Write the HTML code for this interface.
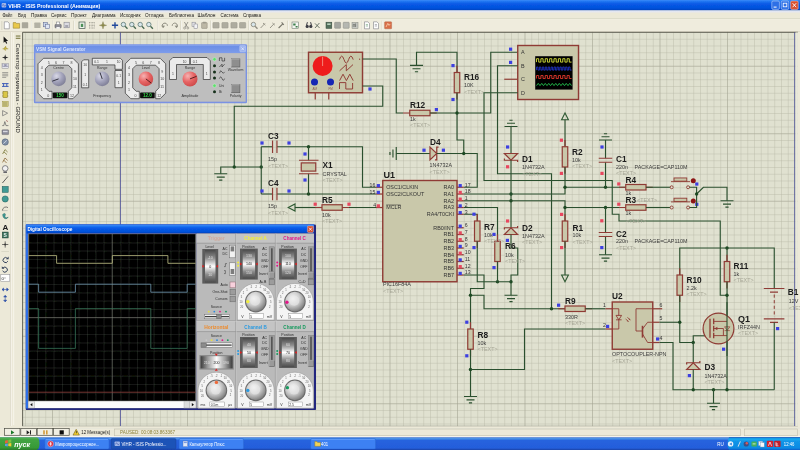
<!DOCTYPE html>
<html lang="ru"><head><meta charset="utf-8"><title>VIHR - ISIS Professional</title>
<style>html,body{margin:0;padding:0;background:#ece9d8;overflow:hidden}svg{display:block}text{font-family:"Liberation Sans",sans-serif}.r{font-weight:bold;font-size:8.3px;fill:#1c1c1c}.v{font-size:5.4px;fill:#3c3c3c}.t{font-size:5.4px;fill:#a6a696}.p{font-size:5.4px;fill:#333}.n{font-size:5.2px;fill:#333}.w{fill:none;stroke:#2b502f;stroke-width:1.12;stroke-linejoin:miter}.c{fill:#c9c8aa;stroke:#8f3b34;stroke-width:1.2}.cl{fill:none;stroke:#8f3b34;stroke-width:1.2}.j{fill:#1f4a24}.mb{fill:#3d3fe0}.mr{fill:#e8465e}</style></head><body>
<svg width="800" height="450" viewBox="0 0 800 450">
<defs><filter id="soft" filterUnits="userSpaceOnUse" x="-10" y="-10" width="820" height="470"><feGaussianBlur stdDeviation="0.4"/></filter></defs>
<g filter="url(#soft)">
<defs>
<linearGradient id="tb" x1="0" y1="0" x2="0" y2="1"><stop offset="0" stop-color="#3a8cf8"/><stop offset="0.16" stop-color="#1c72f0"/><stop offset="0.36" stop-color="#075ae6"/><stop offset="0.76" stop-color="#0552dc"/><stop offset="1" stop-color="#0240ba"/></linearGradient>
<linearGradient id="tk" x1="0" y1="0" x2="0" y2="1"><stop offset="0" stop-color="#3168d5"/><stop offset="0.1" stop-color="#4993e6"/><stop offset="0.25" stop-color="#2663de"/><stop offset="0.85" stop-color="#245edb"/><stop offset="1" stop-color="#1941a5"/></linearGradient>
<linearGradient id="st" x1="0" y1="0" x2="0" y2="1"><stop offset="0" stop-color="#5fb858"/><stop offset="0.15" stop-color="#43a443"/><stop offset="0.8" stop-color="#379a37"/><stop offset="1" stop-color="#2c7a2c"/></linearGradient>
<linearGradient id="tr" x1="0" y1="0" x2="0" y2="1"><stop offset="0" stop-color="#0c59b9"/><stop offset="0.12" stop-color="#19b0f2"/><stop offset="0.3" stop-color="#1295e8"/><stop offset="0.85" stop-color="#0f8ae3"/><stop offset="1" stop-color="#095bc9"/></linearGradient>
<pattern id="gm" x="659.5" y="180.5" width="6.75" height="6.75" patternUnits="userSpaceOnUse"><path d="M0 0.2H6.75 M0.2 0V6.75" stroke="#b6b6a4" stroke-width="0.56" fill="none"/></pattern>
<pattern id="gM" x="659.5" y="200.75" width="67.5" height="67.5" patternUnits="userSpaceOnUse"><path d="M0 0.2H67.5 M0.2 0V67.5" stroke="#a2a290" stroke-width="0.6" fill="none"/></pattern>
</defs>
<rect x="-10" y="-10" width="820" height="470" fill="#ece9d8"/>
<rect x="-10" y="-10" width="820" height="10.5" fill="#3a8cf8"/><rect x="-10" y="0" width="820" height="10.6" fill="url(#tb)"/>
<rect x="1.6" y="3" width="4.6" height="4.6" rx="1" fill="#9fb6e8"/><path d="M2.2 5.4q1-1.6 1.8 0t1.8 0" stroke="#2a3f9a" stroke-width="0.6" fill="none"/>
<text x="8.3" y="7.6" font-size="5.7" font-weight="bold" fill="#fff" textLength="92" lengthAdjust="spacingAndGlyphs">VIHR - ISIS Professional (Анимация)</text>
<rect x="771.8" y="1" width="7.6" height="8.4" rx="1.2" fill="#2d6fe6" stroke="#dfe8fb" stroke-width="0.5"/><rect x="773.6" y="6.6" width="3" height="1" fill="#fff"/>
<rect x="781.2" y="1" width="7.6" height="8.4" rx="1.2" fill="#2d6fe6" stroke="#dfe8fb" stroke-width="0.5"/><rect x="783.2" y="3.2" width="3.6" height="3.6" fill="none" stroke="#fff" stroke-width="0.8"/>
<rect x="790.6" y="1" width="7.6" height="8.4" rx="1.2" fill="#d9502f" stroke="#f3d9d0" stroke-width="0.5"/><path d="M792.6 3.2l3.6 4M796.2 3.2l-3.6 4" stroke="#fff" stroke-width="0.9"/>
<rect x="0" y="10.6" width="800" height="8" fill="#ece9d8"/>
<linearGradient id="mh" x1="0" y1="0" x2="0" y2="1"><stop offset="0" stop-color="#dde5fa"/><stop offset="0.6" stop-color="#e8e8ea"/><stop offset="1" stop-color="#ece9d8"/></linearGradient>
<rect x="0" y="10.6" width="800" height="2.6" fill="url(#mh)"/>
<text x="2.5" y="17.1" font-size="4.9" fill="#151515" textLength="10" lengthAdjust="spacingAndGlyphs">Файл</text>
<text x="18" y="17.1" font-size="4.9" fill="#151515" textLength="8" lengthAdjust="spacingAndGlyphs">Вид</text>
<text x="31" y="17.1" font-size="4.9" fill="#151515" textLength="16" lengthAdjust="spacingAndGlyphs">Правка</text>
<text x="51" y="17.1" font-size="4.9" fill="#151515" textLength="15.5" lengthAdjust="spacingAndGlyphs">Сервис</text>
<text x="71" y="17.1" font-size="4.9" fill="#151515" textLength="16" lengthAdjust="spacingAndGlyphs">Проект</text>
<text x="92" y="17.1" font-size="4.9" fill="#151515" textLength="23.5" lengthAdjust="spacingAndGlyphs">Диаграмма</text>
<text x="120" y="17.1" font-size="4.9" fill="#151515" textLength="20.5" lengthAdjust="spacingAndGlyphs">Исходник</text>
<text x="145" y="17.1" font-size="4.9" fill="#151515" textLength="18.5" lengthAdjust="spacingAndGlyphs">Отладка</text>
<text x="169" y="17.1" font-size="4.9" fill="#151515" textLength="25" lengthAdjust="spacingAndGlyphs">Библиотека</text>
<text x="197.5" y="17.1" font-size="4.9" fill="#151515" textLength="18" lengthAdjust="spacingAndGlyphs">Шаблон</text>
<text x="220.5" y="17.1" font-size="4.9" fill="#151515" textLength="18" lengthAdjust="spacingAndGlyphs">Система</text>
<text x="243" y="17.1" font-size="4.9" fill="#151515" textLength="18" lengthAdjust="spacingAndGlyphs">Справка</text>
<rect x="0" y="18.4" width="800" height="0.5" fill="#c9c6b4"/>
<rect x="0" y="18.9" width="800" height="0.5" fill="#fbfaf4"/>
<rect x="0" y="19.4" width="800" height="12.4" fill="#efecdd"/>
<rect x="0" y="31.3" width="800" height="0.6" fill="#d2cfbe"/>
<rect x="1.6" y="21" width="0.6" height="9" fill="#c9c6b4"/>
<path d="M4.3 21.8h3.4l1.6 1.6v5.4h-5z" fill="#fdfdfd" stroke="#6a6a72" stroke-width="0.5"/>
<path d="M13.2 22.6h2.6l0.6 0.8h3.2v4.8h-6.4z" fill="#e9c84a" stroke="#8a7420" stroke-width="0.5"/>
<rect x="21.8" y="22.3" width="6.4" height="6" rx="0.6" fill="#a9a79a"/>
<rect x="31" y="20.6" width="0.5" height="9.6" fill="#c5c2b0"/><rect x="31.5" y="20.6" width="0.5" height="9.6" fill="#fff"/>
<rect x="34.3" y="22.6" width="6.2" height="5.4" rx="0.6" fill="#b3b1a4"/>
<rect x="43.4" y="22.4" width="4" height="4.4" fill="#c8d4ea" stroke="#56608a" stroke-width="0.5"/><rect x="45.4" y="24.2" width="4" height="4.4" fill="#dfe6f4" stroke="#56608a" stroke-width="0.5"/>
<rect x="52.2" y="20.6" width="0.5" height="9.6" fill="#c5c2b0"/><rect x="52.7" y="20.6" width="0.5" height="9.6" fill="#fff"/>
<rect x="55" y="24.4" width="6.2" height="3.4" rx="0.5" fill="#8d8d96" stroke="#4a4a52" stroke-width="0.5"/><rect x="56.4" y="22" width="3.4" height="2.6" fill="#fff" stroke="#55555c" stroke-width="0.4"/><rect x="56.4" y="27" width="3.4" height="1.8" fill="#f4f4f4"/>
<rect x="64" y="22.2" width="5.2" height="5.6" fill="#dcdce2" stroke="#77777f" stroke-width="0.5"/><rect x="65.2" y="25" width="3" height="2.8" fill="#a7a7b0"/>
<rect x="73.6" y="20.6" width="0.5" height="9.6" fill="#c5c2b0"/><rect x="74.1" y="20.6" width="0.5" height="9.6" fill="#fff"/>
<rect x="79" y="22" width="6" height="6.6" fill="#eef1ea" stroke="#43584a" stroke-width="0.7"/><rect x="80.8" y="23.8" width="2.4" height="3.2" fill="#4b8f58"/>
<path d="M89.2 22.6h5.6M89.2 25.3h5.6M89.2 28h5.6M89.6 22.2v6.2M92 22.2v6.2M94.4 22.2v6.2" stroke="#77776c" stroke-width="0.5" stroke-dasharray="0.8 0.6"/>
<path d="M103 21.6l0.8 2.9 2.9 0.8-2.9 0.8-0.8 2.9-0.8-2.9-2.9-0.8 2.9-0.8z" fill="#8d8a4c" stroke="#6c6a38" stroke-width="0.3"/>
<path d="M115 22.2v6.200M111.900 25.300h6.200" stroke="#234a9c" stroke-width="1.400"/>
<circle cx="123.4" cy="24.5" r="2.2" fill="#d8e6ea" stroke="#6c8480" stroke-width="0.9"/><path d="M125.1 26.2l2.4 2.6" stroke="#4a6a52" stroke-width="1.3"/>
<circle cx="131.8" cy="24.5" r="2.2" fill="#d8e6ea" stroke="#6c8480" stroke-width="0.9"/><path d="M133.5 26.2l2.4 2.6" stroke="#4a6a52" stroke-width="1.3"/>
<circle cx="140.2" cy="24.5" r="2.2" fill="#d8e6ea" stroke="#6c8480" stroke-width="0.9"/><path d="M141.9 26.2l2.4 2.6" stroke="#4a6a52" stroke-width="1.3"/>
<circle cx="148.8" cy="24.5" r="2.2" fill="#d8e6ea" stroke="#6c8480" stroke-width="0.9"/><path d="M150.5 26.2l2.4 2.6" stroke="#4a6a52" stroke-width="1.3"/>
<rect x="157.2" y="20.6" width="0.5" height="9.6" fill="#c5c2b0"/><rect x="157.7" y="20.6" width="0.5" height="9.6" fill="#fff"/>
<path d="M163 27.6a2.6 2.6 0 1 1 4.4-1.8" fill="none" stroke="#8d8b7e" stroke-width="1"/><path d="M161.6 25.4l1.6 2.6 1.8-2.2z" fill="#8d8b7e"/>
<path d="M176.6 27.6a2.6 2.6 0 1 0-4.4-1.8" fill="none" stroke="#8d8b7e" stroke-width="1"/><path d="M178 25.4l-1.6 2.6-1.8-2.2z" fill="#8d8b7e"/>
<rect x="180.6" y="20.6" width="0.5" height="9.6" fill="#c5c2b0"/><rect x="181.1" y="20.6" width="0.5" height="9.6" fill="#fff"/>
<path d="M184.4 22l3 5.2M188 22l-3 5.2" stroke="#83817a" stroke-width="0.8"/><circle cx="184.6" cy="28" r="1" fill="none" stroke="#83817a" stroke-width="0.6"/><circle cx="187.8" cy="28" r="1" fill="none" stroke="#83817a" stroke-width="0.6"/>
<rect x="192" y="22.2" width="3.6" height="4.4" fill="#e6e6ea" stroke="#7f7f88" stroke-width="0.5"/><rect x="194" y="24" width="3.6" height="4.4" fill="#f2f2f5" stroke="#7f7f88" stroke-width="0.5"/>
<rect x="201.6" y="22.6" width="5.6" height="5.8" rx="0.5" fill="#bdb8a6" stroke="#8a8678" stroke-width="0.5"/><rect x="203" y="21.8" width="2.8" height="1.6" fill="#9d9a8c"/>
<rect x="210.4" y="20.6" width="0.5" height="9.6" fill="#c5c2b0"/><rect x="210.9" y="20.6" width="0.5" height="9.6" fill="#fff"/>
<rect x="212.9" y="22.5" width="6.2" height="5.6" rx="0.6" fill="#aeac9f" stroke="#98968a" stroke-width="0.5"/>
<rect x="221.9" y="22.5" width="6.2" height="5.6" rx="0.6" fill="#aeac9f" stroke="#98968a" stroke-width="0.5"/>
<rect x="230.9" y="22.5" width="6.2" height="5.6" rx="0.6" fill="#aeac9f" stroke="#98968a" stroke-width="0.5"/>
<rect x="239.5" y="22.5" width="6.2" height="5.6" rx="0.6" fill="#aeac9f" stroke="#98968a" stroke-width="0.5"/>
<rect x="248.4" y="20.6" width="0.5" height="9.6" fill="#c5c2b0"/><rect x="248.9" y="20.6" width="0.5" height="9.6" fill="#fff"/>
<circle cx="253.4" cy="24.5" r="2.2" fill="#d8e6ea" stroke="#8f8d80" stroke-width="0.9"/><path d="M255.1 26.2l2.4 2.6" stroke="#8f8d80" stroke-width="1.3"/>
<path d="M260.6 28l4.4-4.6M263 23l2.4 2.2" stroke="#9a988b" stroke-width="1"/>
<path d="M270 28l4.4-4.6M272.4 23l2.4 2.2" stroke="#9a988b" stroke-width="1"/>
<path d="M278.6 28l4.2-4.2M281.6 22.4l2.2 2.4" stroke="#77756a" stroke-width="1.1"/>
<rect x="287.6" y="20.6" width="0.5" height="9.6" fill="#c5c2b0"/><rect x="288.1" y="20.6" width="0.5" height="9.6" fill="#fff"/>
<rect x="292" y="22" width="6.4" height="6.6" fill="#f4f6f1" stroke="#5a6a5e" stroke-width="0.5"/><path d="M293.2 23.6h2.4v2h-2.4zM295.6 26h2v1.6h-2z" fill="#3d7f4c"/>
<circle cx="307.2" cy="26.4" r="1.6" fill="#3c3c44"/><circle cx="310.8" cy="26.4" r="1.6" fill="#3c3c44"/><path d="M306.6 25l0.8-2.8M311.4 25l-0.8-2.8" stroke="#3c3c44" stroke-width="1"/>
<path d="M315 28l4.4-5M315 23.4l4.6 4.6" stroke="#4c5a4f" stroke-width="0.8"/>
<rect x="326" y="22.2" width="5.8" height="6.2" fill="#55705c" stroke="#33483a" stroke-width="0.5"/><rect x="327.2" y="23.4" width="3.4" height="1.6" fill="#b9d2be"/>
<rect x="334.6" y="22.3" width="6" height="6" rx="0.6" fill="#a4a6a0" stroke="#85877f" stroke-width="0.5"/>
<rect x="343.2" y="22.3" width="6" height="6" rx="0.6" fill="#b5b7b1" stroke="#85877f" stroke-width="0.5"/>
<rect x="352" y="22.4" width="6" height="6" fill="#c5c7c1" stroke="#85877f" stroke-width="0.5"/><path d="M353.2 27v-2.6h1.6v2.6M355.6 27v-3.6" stroke="#5b5d57" stroke-width="0.6" fill="none"/>
<rect x="361.2" y="20.6" width="0.5" height="9.6" fill="#c5c2b0"/><rect x="361.7" y="20.6" width="0.5" height="9.6" fill="#fff"/>
<path d="M364.5 21.8h3.4l1.6 1.6v5.4h-5z" fill="#fdfdfd" stroke="#6a6a72" stroke-width="0.5"/>
<path d="M365.8 24.6h2.2M365.8 26h2.2" stroke="#4d8a58" stroke-width="0.5"/>
<path d="M373.5 21.8h3.4l1.6 1.6v5.4h-5z" fill="#fdfdfd" stroke="#6a6a72" stroke-width="0.5"/>
<path d="M374.8 24.6h2.2M374.8 26h2.2" stroke="#6f6f78" stroke-width="0.5"/>
<rect x="381.8" y="20.6" width="0.5" height="9.6" fill="#c5c2b0"/><rect x="382.3" y="20.6" width="0.5" height="9.6" fill="#fff"/>
<rect x="384.6" y="21.8" width="7" height="7" rx="0.6" fill="#d96f48" stroke="#a85a3c" stroke-width="0.4"/><path d="M386 27l1.8-3.6 1.2 2 1.2-1.4" stroke="#ffe3c4" stroke-width="0.7" fill="none"/>
<rect x="-10" y="32" width="32.4" height="394" fill="#ece9d8"/>
<rect x="10.4" y="32" width="0.5" height="394" fill="#d0cdbb"/>
<rect x="10.9" y="32" width="0.6" height="394" fill="#fdfcf7"/>
<rect x="13.2" y="33" width="1" height="392" fill="#f7f5ec"/>
<path d="M3.6 36.6v6.2l1.5-1.4 1.1 2.4 1-0.5-1.1-2.3h2z" fill="#151515"/>
<path d="M2.6 48.8h1.8l1.2-1.8 1.2 1.8h1.4M5.6 47v-1M5.6 50.6v-1" stroke="#a8972a" stroke-width="0.8" fill="none"/><path d="M4.4 47.6l2.4 1.2-2.4 1.2z" fill="#d8c444" stroke="#8a7a1e" stroke-width="0.3"/>
<path d="M5.2 54.2l0.7 2.6 2.6 0.7-2.6 0.7-0.7 2.6-0.7-2.6-2.6-0.7 2.6-0.7z" fill="#2a2a2a"/>
<rect x="2" y="63.6" width="6.6" height="4.6" fill="#e4e4ea" stroke="#7c7c88" stroke-width="0.4"/><text x="2.4" y="67.4" font-size="3.4" fill="#3a3a66">LBL</text>
<path d="M2.2 72.6h6M2.2 74.2h6M2.2 75.8h6M2.2 77.4h4" stroke="#6a6a6a" stroke-width="0.6"/>
<path d="M2 83.6h6.6M2 86.4h6.6M3.6 83.6v2.8M6.8 83.6v2.8" stroke="#2d4fb4" stroke-width="0.9"/>
<rect x="3" y="91.4" width="4.4" height="6.2" fill="#d9c646" stroke="#7c701c" stroke-width="0.5"/><path d="M2 93h1M2 96h1M7.4 93h1M7.4 96h1" stroke="#7c701c" stroke-width="0.5"/>
<rect x="2.400" y="101.200" width="5.800" height="5.600" fill="#e2d98a" stroke="#8a8240" stroke-width="0.4"/><path d="M3 103h4.600M3 105h4.600" stroke="#5c5a3a" stroke-width="0.6"/>
<path d="M2.6 110.6l5 2.6-5 2.6z" fill="none" stroke="#6f6f6f" stroke-width="0.7"/>
<path d="M2.2 125.6h1.6l1-4 1.2 4h2.4" stroke="#5f5f5f" stroke-width="0.7" fill="none"/><path d="M6 120.4l2 1.2" stroke="#8a3a3a" stroke-width="0.6"/>
<rect x="2" y="129.8" width="6.6" height="4.8" rx="0.6" fill="#8c8c98" stroke="#50505a" stroke-width="0.4"/><rect x="3" y="130.8" width="4.6" height="1.4" fill="#d8d8e0"/>
<circle cx="5.2" cy="142" r="3.2" fill="#7f8fa6" stroke="#4a566a" stroke-width="0.5"/><path d="M3.4 143.6l3.4-3.2" stroke="#dfe6f0" stroke-width="0.8"/>
<path d="M2.6 154l2.4-4.4M5 149.600l2.600 2.4M4 152l3 2.600" stroke="#7b7a3a" stroke-width="0.8" fill="none"/>
<path d="M2.6 162.4l2.4-4.4M5 158l2.6 2.4M3.6 160l3 3" stroke="#8a6a3a" stroke-width="0.8" fill="none"/>
<circle cx="5.2" cy="168.400" r="2.8" fill="#f1f1f1" stroke="#55555a" stroke-width="0.7"/><path d="M3.4 171.400h3.6v1.6h-3.600z" fill="#66666c"/>
<rect x="1.4" y="174.8" width="7.6" height="0.5" fill="#c9c6b4"/>
<path d="M2.4 183l5.6-6.6" stroke="#3a3a3a" stroke-width="0.8"/>
<rect x="2.2" y="186.4" width="6" height="6" fill="#3f9a94" stroke="#1f5a56" stroke-width="0.5"/>
<circle cx="5.2" cy="199" r="3.1" fill="#3f9a94" stroke="#1f5a56" stroke-width="0.5"/>
<path d="M2.4 210.6a3.6 3.6 0 0 1 5.6-3" stroke="#4a4a4a" stroke-width="0.7" fill="none"/><path d="M2.4 210.6h5.2" stroke="#8a8a8a" stroke-width="0.4"/>
<path d="M2.6 214.6c2-2 3.400-1 2.600 1s1 3 3 1.400c-1 2.400-5 3-5.600-2.400z" fill="#3f9a94" stroke="#1f5a56" stroke-width="0.4"/>
<text x="2.4" y="229.6" font-size="8" font-family="Liberation Serif,serif" fill="#1a1a1a" font-weight="bold">A</text>
<rect x="2.2" y="232" width="6" height="6" fill="#3a6f5a" stroke="#1d3a2f" stroke-width="0.4"/><text x="3.4" y="237" font-size="5" font-weight="bold" fill="#e9f3ee">S</text>
<path d="M5.200 241.400v6.200M2.100 244.500h6.200" stroke="#3a3a3a" stroke-width="0.7"/><circle cx="5.2" cy="244.5" r="1" fill="#3a3a3a"/>
<rect x="1.4" y="251.2" width="7.6" height="0.5" fill="#c9c6b4"/>
<path d="M7.4 258.400a2.500 2.500 0 1 0 0.400 2.800" fill="none" stroke="#34425a" stroke-width="1"/><path d="M8.600 256.600v2.600h-2.600z" fill="#34425a"/>
<path d="M3 268a2.500 2.500 0 1 1-0.400 2.800" fill="none" stroke="#34425a" stroke-width="1"/><path d="M1.800 266.200v2.600h2.600z" fill="#34425a"/>
<rect x="0.8" y="274.600" width="9" height="6.600" fill="#fff" stroke="#8a8a92" stroke-width="0.5"/><text x="1.6" y="279.800" font-size="4.400" fill="#222">0°</text>
<path d="M2 289.500h6.400M2 289.500l1.600-1.500v3zM8.400 289.500l-1.600-1.500v3z" stroke="#2b4fa8" stroke-width="0.6" fill="#2b4fa8"/>
<path d="M5.200 295.400v6.400M5.200 295.400l-1.500 1.600h3zM5.200 301.800l-1.500-1.600h3z" stroke="#2b4fa8" stroke-width="0.6" fill="#2b4fa8"/>
<g transform="translate(15.8,43.6) rotate(90)"><text x="0" y="0" font-size="5.3" fill="#222" textLength="89.2" lengthAdjust="spacingAndGlyphs">Селектор терминала - GROUND</text></g>
<rect x="15.8" y="35.4" width="4.6" height="1.3" fill="#8c8a5a"/><rect x="15.8" y="37.7" width="4.6" height="1.3" fill="#8c8a5a"/>
<rect x="22.4" y="31.9" width="775.6" height="394.4" fill="#e0e1d0"/>
<rect x="22.4" y="31.9" width="775.6" height="394.4" fill="url(#gm)"/>
<rect x="22.4" y="31.9" width="775.6" height="394.4" fill="url(#gM)"/>
<path d="M22.6 426.3V32.3H798" fill="none" stroke="#55554a" stroke-width="0.9"/><path d="M22.6 426.2H798" fill="none" stroke="#8a8a7c" stroke-width="0.6"/>
<rect x="797.6" y="31.9" width="2.4" height="394.6" fill="#ece9d8"/><rect x="795.4" y="32.4" width="2.2" height="393.6" fill="#e8e8da"/>
<path d="M120.5 32.4V426M794.6 32.4V426" stroke="#3f4496" stroke-width="0.7" fill="none"/>
<rect class="c" x="308.5" y="52.25" width="54" height="40.5" style="stroke-width:1.4"/>
<circle cx="322.6" cy="66" r="10" fill="#ee1c1c"/>
<path d="M322.600 66V56.6" stroke="#f6b0a0" stroke-width="0.7"/>
<circle cx="314.5" cy="82" r="3.5" fill="#1426b4"/><circle cx="330.5" cy="82" r="3.5" fill="#1426b4"/>
<text class="n" x="312.4" y="89.6" style="font-size:3px;fill:#8a5a50">AM</text>
<text class="n" x="328.4" y="89.6" style="font-size:3px;fill:#8a5a50">FM</text>
<path class="cl" d="M339.400 59.600q2.300-7 4.600 0t4.600 0t4.600 0" style="stroke-width:0.95"/>
<path class="cl" d="M339.600 70.800L346.300 64.600V70.800L353 64.600" style="stroke-width:0.95"/>
<path class="cl" d="M339.600 80.600L343 74.200L346.400 80.600L349.800 74.200L353.200 80.600" style="stroke-width:0.95"/>
<path class="cl" d="M339.500 89V82.600H345.800V89H352.600V83" style="stroke-width:0.95"/>
<circle cx="359.600" cy="59.200" r="0.6" fill="#8f3b34"/>
<polyline class="cl" points="315.25,92.75 315.25,99.5"/>
<polyline class="cl" points="328.75,92.75 328.75,99.5"/>
<polyline class="w" points="362.5,59 396.25,59 396.25,113 403,113"/>
<polyline class="w" points="362.5,86 382.75,86 382.75,106.25 234.25,106.25 234.25,167"/>
<rect class="mb" x="368.4" y="87.4" width="3.2" height="3.2"/>
<polyline class="w" points="220.75,173.75 220.75,167 261.25,167"/>
<path class="w" d="M214.25 173.75H227.25M216.75 177.05H224.75M219.15 180.05H222.35" style="stroke-width:1.15"/>
<circle class="j" cx="234.25" cy="167" r="1.7"/>
<circle class="j" cx="261.25" cy="167" r="1.7"/>
<polyline class="w" points="261.25,146.75 261.25,194"/>
<polyline class="w" points="261.25,146.75 272.52,146.75"/>
<polyline class="w" points="276.98,146.75 362.5,146.75 362.5,187.25 376,187.25"/>
<path class="cl" d="M272.55 140.55V152.95M276.95 140.55V152.95" style="stroke-width:1.2"/>
<polyline class="w" points="261.25,194 272.52,194"/>
<polyline class="w" points="276.98,194 376,194"/>
<path class="cl" d="M272.55 187.8V200.2M276.95 187.8V200.2" style="stroke-width:1.2"/>
<circle class="j" cx="308.5" cy="146.75" r="1.7"/>
<circle class="j" cx="308.5" cy="194" r="1.7"/>
<polyline class="w" points="308.5,146.75 308.5,160.25"/>
<polyline class="w" points="308.5,173.75 308.5,194"/>
<path class="cl" d="M299 160.25H318.5M299 173.75H318.5" style="stroke-width:1.2"/>
<rect class="c" x="301.25" y="162.9" width="14.5" height="8.200"/>
<rect class="mb" x="260.4" y="141.4" width="3.2" height="3.2"/>
<rect class="mb" x="287.4" y="141.4" width="3.2" height="3.2"/>
<rect class="mb" x="260.4" y="189.4" width="3.2" height="3.2"/>
<rect class="mb" x="287.4" y="189.4" width="3.2" height="3.2"/>
<rect class="mb" x="303.4" y="152.4" width="3.2" height="3.2"/>
<rect class="mb" x="303.4" y="178.4" width="3.2" height="3.2"/>
<text class="r" x="268" y="139">C3</text>
<text class="v" x="268" y="160.6">15p</text>
<text class="t" x="268" y="167.6">&lt;TEXT&gt;</text>
<text class="r" x="268" y="186">C4</text>
<text class="v" x="268" y="207.8">15p</text>
<text class="t" x="268" y="214.6">&lt;TEXT&gt;</text>
<text class="r" x="322.5" y="168.4">X1</text>
<text class="v" x="322.5" y="175.8">CRYSTAL</text>
<text class="t" x="322.5" y="182">&lt;TEXT&gt;</text>
<path d="M288.25 207.5L295 203.9V211.1Z" fill="none" stroke="#2f5a33" stroke-width="1.1"/>
<polyline class="w" points="295,207.5 322,207.5"/>
<polyline class="w" points="342.25,207.5 376,207.5"/>
<path class="cl" d="M315.25 207.5H322M342.25 207.5H349"/>
<rect class="c" x="322" y="204.75" width="20.25" height="5.5"/>
<rect class="mr" x="313.6" y="202.6" width="3.2" height="3.2"/>
<rect class="mr" x="347.4" y="202.6" width="3.2" height="3.2"/>
<text class="r" x="322" y="203">R5</text>
<text class="v" x="322" y="216.5">10k</text>
<text class="t" x="322" y="223">&lt;TEXT&gt;</text>
<rect class="c" x="382.75" y="180.5" width="74.25" height="101.25" style="stroke-width:1.4"/>
<text class="r" x="383.5" y="178.2" style="font-size:9px">U1</text>
<polyline class="cl" points="376,187.25 382.75,187.25"/>
<text class="p" x="386.15" y="189.15">OSC1/CLKIN</text>
<text class="n" x="369.5" y="186.75">16</text>
<rect class="mb" x="376.75" y="184.05" width="3.2" height="3.2"/>
<polyline class="cl" points="376,194 382.75,194"/>
<text class="p" x="386.15" y="195.9">OSC2/CLKOUT</text>
<text class="n" x="369.5" y="193.5">15</text>
<rect class="mb" x="376.75" y="190.8" width="3.2" height="3.2"/>
<polyline class="cl" points="376,207.5 382.75,207.5"/>
<text class="p" x="386.15" y="209.4">MCLR</text>
<text class="n" x="373.2" y="207">4</text>
<rect class="mr" x="376.75" y="204.3" width="3.2" height="3.2"/>
<path d="M386.15 204.9h14.5" stroke="#333" stroke-width="0.5"/>
<polyline class="cl" points="457,187.25 463.75,187.25"/>
<text class="p" x="454" y="189.15" text-anchor="end">RA0</text>
<text class="n" x="464.75" y="186.65">17</text>
<rect class="mb" x="458.6" y="184.05" width="3.2" height="3.2"/>
<polyline class="cl" points="457,194 463.75,194"/>
<text class="p" x="454" y="195.9" text-anchor="end">RA1</text>
<text class="n" x="464.75" y="193.4">18</text>
<rect class="mr" x="458.6" y="190.8" width="3.2" height="3.2"/>
<polyline class="cl" points="457,200.75 463.75,200.75"/>
<text class="p" x="454" y="202.65" text-anchor="end">RA2</text>
<text class="n" x="464.75" y="200.15">1</text>
<rect class="mr" x="458.6" y="197.55" width="3.2" height="3.2"/>
<polyline class="cl" points="457,207.5 463.75,207.5"/>
<text class="p" x="454" y="209.4" text-anchor="end">RA3</text>
<text class="n" x="464.75" y="206.9">2</text>
<rect class="mb" x="458.6" y="204.3" width="3.2" height="3.2"/>
<polyline class="cl" points="457,214.25 463.75,214.25"/>
<text class="p" x="454" y="216.15" text-anchor="end">RA4/T0CKI</text>
<text class="n" x="464.75" y="213.65">3</text>
<rect class="mb" x="458.6" y="211.05" width="3.2" height="3.2"/>
<polyline class="cl" points="457,227.75 463.75,227.75"/>
<text class="p" x="454" y="229.65" text-anchor="end">RB0/INT</text>
<text class="n" x="464.75" y="227.15">6</text>
<rect class="mb" x="458.6" y="224.55" width="3.2" height="3.2"/>
<polyline class="cl" points="457,234.5 463.75,234.5"/>
<text class="p" x="454" y="236.4" text-anchor="end">RB1</text>
<text class="n" x="464.75" y="233.9">7</text>
<rect class="mr" x="458.6" y="231.3" width="3.2" height="3.2"/>
<polyline class="cl" points="457,241.25 463.75,241.25"/>
<text class="p" x="454" y="243.15" text-anchor="end">RB2</text>
<text class="n" x="464.75" y="240.65">8</text>
<rect class="mr" x="458.6" y="238.05" width="3.2" height="3.2"/>
<polyline class="cl" points="457,248 463.75,248"/>
<text class="p" x="454" y="249.9" text-anchor="end">RB3</text>
<text class="n" x="464.75" y="247.4">9</text>
<rect class="mb" x="458.6" y="244.8" width="3.2" height="3.2"/>
<polyline class="cl" points="457,254.75 463.75,254.75"/>
<text class="p" x="454" y="256.65" text-anchor="end">RB4</text>
<text class="n" x="464.75" y="254.15">10</text>
<rect class="mr" x="458.6" y="251.55" width="3.2" height="3.2"/>
<polyline class="cl" points="457,261.5 463.75,261.5"/>
<text class="p" x="454" y="263.4" text-anchor="end">RB5</text>
<text class="n" x="464.75" y="260.9">11</text>
<rect class="mb" x="458.6" y="258.3" width="3.2" height="3.2"/>
<polyline class="cl" points="457,268.25 463.75,268.25"/>
<text class="p" x="454" y="270.15" text-anchor="end">RB6</text>
<text class="n" x="464.75" y="267.65">12</text>
<rect class="mr" x="458.6" y="265.05" width="3.2" height="3.2"/>
<polyline class="cl" points="457,275 463.75,275"/>
<text class="p" x="454" y="276.9" text-anchor="end">RB7</text>
<text class="n" x="464.75" y="274.4">13</text>
<rect class="mb" x="458.6" y="271.8" width="3.2" height="3.2"/>
<text class="v" x="383" y="286.4">PIC16F84A</text>
<text class="t" x="383" y="293">&lt;TEXT&gt;</text>
<polyline class="w" points="416.5,65.75 416.5,52.25 457,52.25 457,72.5"/>
<path class="w" d="M410 65.41H423M412.5 68.71H420.5M414.9 71.71H418.1" style="stroke-width:1.15"/>
<path class="cl" d="M457 65.75V72.5M457 92.75V99.5"/>
<rect class="c" x="454.25" y="72.5" width="5.5" height="20.25"/>
<polyline class="w" points="457,92.75 457,140 463.75,140 463.75,153.5"/>
<rect class="mb" x="451.4" y="64" width="3.2" height="3.2"/>
<rect class="mb" x="451.4" y="97.9" width="3.2" height="3.2"/>
<text class="r" x="464" y="80">R16</text>
<text class="v" x="464" y="87.3">10K</text>
<text class="t" x="464" y="93.8">&lt;TEXT&gt;</text>
<path class="cl" d="M403 113H409.75M430 113H436.75"/>
<rect class="c" x="409.75" y="110.25" width="20.25" height="5.5"/>
<polyline class="w" points="430,113 490.75,113 490.75,52.25 517.75,52.25"/>
<circle class="j" cx="457" cy="113" r="1.7"/>
<rect class="mb" x="434.8" y="108" width="3.2" height="3.2"/>
<text class="r" x="410" y="108">R12</text>
<text class="v" x="410" y="120.6">1k</text>
<text class="t" x="410" y="127.4">&lt;TEXT&gt;</text>
<rect class="c" x="517.75" y="45.5" width="60.75" height="54" style="stroke-width:1.4"/>
<rect x="535.200" y="56.200" width="37.400" height="33.400" fill="#050505"/>
<text class="p" x="520.95" y="54.25">A</text>
<text class="p" x="520.95" y="67.75">B</text>
<text class="p" x="520.95" y="81.25">C</text>
<text class="p" x="520.95" y="94.75">D</text>
<path d="M536.5 62.1V58.7H538.69V62.1H540.88V58.7H543.06V62.1H545.25V58.7H547.44V62.1H549.62V58.7H551.81V62.1H554V58.7H556.19V62.1H558.38V58.7H560.56V62.1H562.75V58.7H564.94V62.1H567.12V58.7H569.31V62.1H571.5" fill="none" stroke="#d7e23a" stroke-width="0.9"/>
<path d="M536.5 70.1V67.1H537.96V70.1H539.42V67.1H540.88V70.1H542.33V67.1H543.79V70.1H545.25V67.1H546.71V70.1H548.17V67.1H549.62V70.1H551.08V67.1H552.54V70.1H554V67.1H555.46V70.1H556.92V67.1H558.37V70.1H559.83V67.1H561.29V70.1H562.75V67.1H564.21V70.1H565.67V67.1H567.12V70.1H568.58V67.1H570.04V70.1H571.5" fill="none" stroke="#1f35d8" stroke-width="0.8"/>
<path d="M536.5 78.5V75.5H538.69V78.5H540.88V75.5H543.06V78.5H545.25V75.5H547.44V78.5H549.62V75.5H551.81V78.5H554V75.5H556.19V78.5H558.38V75.5H560.56V78.5H562.75V75.5H564.94V78.5H567.12V75.5H569.31V78.5H571.5" fill="none" stroke="#e0352a" stroke-width="0.9"/>
<path d="M536.500 85.600l1.750 -2.200l1.750 2.200l1.750 -2.200l1.750 2.200l1.750 -2.200l1.750 2.200l1.750 -2.200l1.750 2.200l1.750 -2.200l1.750 2.200l1.750 -2.200l1.750 2.200l1.750 -2.200l1.750 2.200l1.750 -2.200l1.750 2.200l1.750 -2.200l1.750 2.200l1.750 -2.200l1.750 2.200" fill="none" stroke="#1fc04a" stroke-width="0.9"/>
<polyline class="cl" points="517.75,79.25 504.25,79.25"/>
<rect class="mb" x="509" y="47.6" width="3.2" height="3.2"/>
<rect class="mb" x="509" y="60.8" width="3.2" height="3.2"/>
<polyline class="w" points="517.75,92.75 484,92.75 484,180.5 612.25,180.5 612.25,214.25 619,214.25 619,221 720.25,221 720.25,295.25 727,295.25"/>
<polyline class="w" points="517.75,65.75 497.5,65.75 497.5,173.75 551.5,173.75 551.5,308.75"/>
<path class="w" d="M396.25 147V160M392.95 149.5V157.5M389.95 151.9V155.1" style="stroke-width:1.15"/>
<polyline class="w" points="396.25,153.5 430,153.5"/>
<path class="c" d="M430 147.1V159.9L436.75 153.5Z"/>
<path class="cl" d="M438.55 147.1H436.75V159.9H434.95" style="stroke-width:1.2"/>
<polyline class="w" points="436.75,153.5 477.25,153.5 477.25,187.25 463.75,187.25"/>
<circle class="j" cx="463.75" cy="153.5" r="1.7"/>
<rect class="mb" x="422.4" y="148.6" width="3.2" height="3.2"/>
<rect class="mb" x="441.8" y="148.6" width="3.2" height="3.2"/>
<text class="r" x="430" y="145">D4</text>
<text class="v" x="429.5" y="167.4">1N4732A</text>
<text class="t" x="429.5" y="174">&lt;TEXT&gt;</text>
<path class="w" d="M504.5 126.5H517.5M507 123.2H515M509.4 120.2H512.6" style="stroke-width:1.15"/>
<polyline class="w" points="511,126.5 511,153.5"/>
<path class="c" d="M504.4 153.5H517.6L511 160.25Z"/>
<path class="cl" d="M504.4 158.45V160.25H517.6V162.05" style="stroke-width:1.2"/>
<polyline class="w" points="511,160.25 511,227.75"/>
<path class="c" d="M504.4 234.5H517.6L511 227.75Z"/>
<path class="cl" d="M504.4 229.55V227.75H517.6V225.95" style="stroke-width:1.2"/>
<polyline class="w" points="511,234.5 511,248 517.75,248 517.75,275 511,275 511,295.25"/>
<path class="w" d="M504.5 295.25H517.5M507 298.55H515M509.4 301.55H512.6" style="stroke-width:1.15"/>
<circle class="j" cx="511" cy="194" r="1.7"/>
<circle class="j" cx="511" cy="200.75" r="1.7"/>
<circle class="j" cx="511" cy="281.75" r="1.7"/>
<circle class="j" cx="497.5" cy="281.75" r="1.7"/>
<rect class="mb" x="506" y="145.4" width="3.2" height="3.2"/>
<rect class="mr" x="506" y="165.2" width="3.2" height="3.2"/>
<rect class="mr" x="506" y="219.4" width="3.2" height="3.2"/>
<rect class="mb" x="505.8" y="238.8" width="3.2" height="3.2"/>
<text class="r" x="522" y="162.4">D1</text>
<text class="v" x="522" y="169.4">1N4732A</text>
<text class="t" x="522" y="175.8">&lt;TEXT&gt;</text>
<text class="r" x="522" y="231">D2</text>
<text class="v" x="522" y="238">1N4732A</text>
<text class="t" x="522" y="244.4">&lt;TEXT&gt;</text>
<path d="M561.6 119.75H568.4L565 113Z" fill="none" stroke="#2f5a33" stroke-width="1.1"/>
<polyline class="w" points="565,119.75 565,146.75"/>
<path class="cl" d="M565 140V146.75M565 167V173.75"/>
<rect class="c" x="562.25" y="146.75" width="5.5" height="20.25"/>
<polyline class="w" points="565,167 565,194 463.75,194"/>
<polyline class="w" points="565,187.25 625.75,187.25"/>
<circle class="j" cx="565" cy="187.25" r="1.7"/>
<circle class="j" cx="605.5" cy="187.25" r="1.7"/>
<polyline class="w" points="463.75,200.75 565,200.75 565,221"/>
<path class="cl" d="M565 214.25V221M565 241.25V248"/>
<rect class="c" x="562.25" y="221" width="5.5" height="20.25"/>
<polyline class="w" points="565,241.25 565,275"/>
<path d="M561.6 275H568.4L565 281.75Z" fill="none" stroke="#2f5a33" stroke-width="1.1"/>
<polyline class="w" points="565,207.5 625.75,207.5"/>
<circle class="j" cx="565" cy="207.5" r="1.7"/>
<circle class="j" cx="605.5" cy="207.5" r="1.7"/>
<rect class="mr" x="559.8" y="138.6" width="3.2" height="3.2"/>
<rect class="mr" x="559.8" y="171.8" width="3.2" height="3.2"/>
<rect class="mr" x="560" y="212.8" width="3.2" height="3.2"/>
<rect class="mr" x="560" y="246" width="3.2" height="3.2"/>
<text class="r" x="572" y="155">R2</text>
<text class="v" x="572" y="161.8">10k</text>
<text class="t" x="572" y="168">&lt;TEXT&gt;</text>
<text class="r" x="572.5" y="230.5">R1</text>
<text class="v" x="572.5" y="237.1">10k</text>
<text class="t" x="572.5" y="243.5">&lt;TEXT&gt;</text>
<path class="w" d="M599 140H612M601.5 136.7H609.5M603.9 133.7H607.1" style="stroke-width:1.15"/>
<polyline class="w" points="605.5,140 605.5,158.22"/>
<polyline class="w" points="605.5,162.28 605.5,187.25"/>
<path class="cl" d="M598.75 158.25H612.25M598.75 162.25H612.25" style="stroke-width:1.2"/>
<polyline class="w" points="605.5,207.5 605.5,232.47"/>
<polyline class="w" points="605.5,236.53 605.5,254.75"/>
<path class="cl" d="M598.75 232.5H612.25M598.75 236.5H612.25" style="stroke-width:1.2"/>
<path class="w" d="M599 254.75H612M601.5 258.05H609.5M603.9 261.05H607.1" style="stroke-width:1.15"/>
<rect class="mb" x="600.4" y="145.4" width="3.2" height="3.2"/>
<rect class="mr" x="600.4" y="171.8" width="3.2" height="3.2"/>
<rect class="mr" x="600.2" y="219.2" width="3.2" height="3.2"/>
<rect class="mb" x="600.2" y="246" width="3.2" height="3.2"/>
<text class="r" x="616" y="162">C1</text>
<text class="v" x="616" y="168.7">220n</text>
<text class="v" x="634.5" y="168.7">PACKAGE=CAP110M</text>
<text class="t" x="616" y="175.2">&lt;TEXT&gt;</text>
<text class="r" x="616" y="237">C2</text>
<text class="v" x="616" y="243.4">220n</text>
<text class="v" x="634.5" y="243.4">PACKAGE=CAP110M</text>
<text class="t" x="616" y="249.8">&lt;TEXT&gt;</text>
<path class="cl" d="M619 187.25H625.75M646 187.25H652.75"/>
<rect class="c" x="625.75" y="184.5" width="20.25" height="5.5"/>
<polyline class="w" points="646,187.25 670.4,187.25"/>
<circle cx="671.700" cy="187.25" r="1.500" fill="#e0e1d0" stroke="#8f3b34" stroke-width="0.9"/>
<circle cx="688.100" cy="187.25" r="1.500" fill="#e0e1d0" stroke="#8f3b34" stroke-width="0.9"/>
<rect class="c" x="674" y="177.95" width="12.800" height="3.200" style="stroke-width:0.9"/>
<path class="cl" d="M671 181.65H690" style="stroke-width:0.9"/>
<circle cx="693.300" cy="180.65" r="2.500" fill="#8c1515"/>
<rect class="mb" x="695.2" y="182.45" width="3.2" height="3.2"/>
<rect class="mr" x="617.2" y="182.35" width="3.2" height="3.2"/>
<text class="r" x="625.5" y="182.95">R4</text>
<text class="v" x="625.5" y="195.05">1k</text>
<path class="cl" d="M619 207.5H625.75M646 207.5H652.75"/>
<rect class="c" x="625.75" y="204.75" width="20.25" height="5.5"/>
<polyline class="w" points="646,207.5 670.4,207.5"/>
<circle cx="671.700" cy="207.5" r="1.500" fill="#e0e1d0" stroke="#8f3b34" stroke-width="0.9"/>
<circle cx="688.100" cy="207.5" r="1.500" fill="#e0e1d0" stroke="#8f3b34" stroke-width="0.9"/>
<rect class="c" x="674" y="198.2" width="12.800" height="3.200" style="stroke-width:0.9"/>
<path class="cl" d="M671 201.9H690" style="stroke-width:0.9"/>
<circle cx="693.300" cy="200.9" r="2.500" fill="#8c1515"/>
<rect class="mb" x="695.2" y="202.7" width="3.2" height="3.2"/>
<rect class="mr" x="617.2" y="202.6" width="3.2" height="3.2"/>
<text class="r" x="625.5" y="203.2">R3</text>
<text class="v" x="625.5" y="215.3">1k</text>
<text class="t" x="637" y="202.4">&lt;TEXT&gt;</text>
<text class="t" x="626" y="222.6">&lt;TEXT&gt;</text>
<polyline class="w" points="689.5,187.25 696.6,187.25 696.6,207.5 689.5,207.5"/>
<polyline class="w" points="696.6,194 703.4,187.25 727,187.25 727,200.75"/>
<circle class="j" cx="696.600" cy="194" r="1.700"/>
<path class="w" d="M720.5 200.75H733.5M723 204.05H731M725.4 207.05H728.6" style="stroke-width:1.15"/>
<polyline class="w" points="463.75,207.5 497.5,207.5 497.5,241.25"/>
<path class="cl" d="M497.5 234.5V241.25M497.5 261.5V268.25"/>
<rect class="c" x="494.75" y="241.25" width="5.5" height="20.25"/>
<polyline class="w" points="497.5,261.5 497.5,281.75"/>
<polyline class="w" points="463.75,214.25 477.25,214.25 477.25,221"/>
<path class="cl" d="M477.25 214.25V221M477.25 241.25V248"/>
<rect class="c" x="474.5" y="221" width="5.5" height="20.25"/>
<polyline class="w" points="477.25,241.25 477.25,281.75 511,281.75"/>
<rect class="mb" x="472.4" y="212.6" width="3.2" height="3.2"/>
<rect class="mb" x="472.4" y="246" width="3.2" height="3.2"/>
<rect class="mb" x="492.4" y="232.8" width="3.2" height="3.2"/>
<rect class="mb" x="492.4" y="266" width="3.2" height="3.2"/>
<text class="r" x="484" y="230">R7</text>
<text class="v" x="484" y="236.6">10k</text>
<text class="t" x="484" y="243">&lt;TEXT&gt;</text>
<text class="r" x="505" y="249.4">R6</text>
<text class="v" x="505" y="256.6">10k</text>
<text class="t" x="505" y="263">&lt;TEXT&gt;</text>
<polyline class="w" points="463.75,275 484,275 484,288.5 470.5,288.5 470.5,329"/>
<polyline class="w" points="470.5,295.25 484,295.25 484,308.75 565,308.75"/>
<circle class="j" cx="470.5" cy="295.25" r="1.7"/>
<circle class="j" cx="551.5" cy="308.75" r="1.7"/>
<path class="cl" d="M470.5 322.25V329M470.5 349.25V356"/>
<rect class="c" x="467.75" y="329" width="5.5" height="20.25"/>
<polyline class="w" points="470.5,349.25 470.5,396.5"/>
<path class="w" d="M464 396.5H477M466.5 399.8H474.5M468.9 402.8H472.1" style="stroke-width:1.15"/>
<circle class="j" cx="470.5" cy="369.5" r="1.7"/>
<polyline class="w" points="470.5,369.5 524.5,369.5 524.5,329 605.5,329"/>
<rect class="mb" x="465.2" y="320.6" width="3.2" height="3.2"/>
<rect class="mb" x="465.2" y="354.2" width="3.2" height="3.2"/>
<text class="r" x="477.5" y="337.5">R8</text>
<text class="v" x="477.5" y="344.5">10k</text>
<text class="t" x="477.5" y="350.5">&lt;TEXT&gt;</text>
<path class="cl" d="M558.25 308.75H565M585.25 308.75H592"/>
<rect class="c" x="565" y="306" width="20.25" height="5.5"/>
<polyline class="w" points="585.25,308.75 605.5,308.75"/>
<rect class="mb" x="557" y="303.6" width="3.2" height="3.2"/>
<text class="r" x="565" y="304.2">R9</text>
<text class="v" x="565" y="318.6">330R</text>
<text class="t" x="565" y="324.6">&lt;TEXT&gt;</text>
<rect class="c" x="612.25" y="302" width="40.5" height="47.25" style="stroke-width:1.4"/>
<text class="r" x="612" y="299.2">U2</text>
<text class="v" x="612" y="356.4">OPTOCOUPLER-NPN</text>
<text class="t" x="612" y="362.8">&lt;TEXT&gt;</text>
<polyline class="cl" points="605.5,308.75 612.25,308.75"/>
<polyline class="cl" points="605.5,329 612.25,329"/>
<polyline class="cl" points="652.75,308.75 662.2,308.75"/>
<polyline class="cl" points="652.75,322.25 659.5,322.25"/>
<polyline class="cl" points="652.75,342.5 659.5,342.5"/>
<text class="n" x="603" y="306.6">1</text>
<text class="n" x="603" y="327">2</text>
<text class="n" x="659.6" y="306.6">6</text>
<text class="n" x="659.6" y="320">5</text>
<text class="n" x="659.6" y="340.4">4</text>
<rect class="mb" x="606" y="324.8" width="3.2" height="3.2"/>
<rect class="mb" x="656" y="337.4" width="3.2" height="3.2"/>
<path class="cl" d="M612.25 308.75H618.800V329H612.25" style="stroke-width:0.9"/>
<path d="M616 315.400h5.600l-2.800 4.400z" fill="#c9c8aa" stroke="#8f3b34" stroke-width="0.9"/><path class="cl" d="M616 319.800h5.600" style="stroke-width:0.9"/>
<path class="cl" d="M625.600 319l3 2.600M627.400 317.400l3 2.600" style="stroke-width:0.8"/><path d="M628.600 321.600l-1.800-0.400 1-1zM630.400 320l-1.800-0.400 1-1z" fill="#8f3b34"/>
<path class="cl" d="M652.75 308.75H636V331H642.500" style="stroke-width:0.9"/>
<path class="cl" d="M642.500 325.800V337.600" style="stroke-width:1.600"/>
<path class="cl" d="M652.75 322.25H647.600L642.500 329M642.500 334L647.600 342.5H652.75" style="stroke-width:0.9"/>
<polyline class="w" points="679.75,275 679.75,248 774.25,248 774.25,288.5"/>
<circle class="j" cx="727" cy="248" r="1.7"/>
<path class="cl" d="M679.75 268.25V275M679.75 295.25V302"/>
<rect class="c" x="677" y="275" width="5.5" height="20.25"/>
<polyline class="w" points="659.5,322.25 679.75,322.25"/>
<polyline class="w" points="679.75,295.25 679.75,342.5 693.25,342.5 693.25,335.75 710.12,335.75"/>
<circle class="j" cx="679.75" cy="322.25" r="1.7"/>
<circle class="j" cx="693.25" cy="342.5" r="1.7"/>
<text class="r" x="686.5" y="283">R10</text>
<text class="v" x="686.5" y="289.8">2.2k</text>
<text class="t" x="686.5" y="296.2">&lt;TEXT&gt;</text>
<polyline class="w" points="727,248 727,261.5"/>
<path class="cl" d="M727 254.75V261.5M727 281.75V288.5"/>
<rect class="c" x="724.25" y="261.5" width="5.5" height="20.25"/>
<polyline class="w" points="727,281.75 727,389.75"/>
<circle class="j" cx="727" cy="295.25" r="1.7"/>
<text class="r" x="733.5" y="269.4">R11</text>
<text class="v" x="733.5" y="276.2">1k</text>
<text class="t" x="733.5" y="282.4">&lt;TEXT&gt;</text>
<circle cx="718.500" cy="328.500" r="15.400" fill="#c9c8aa" stroke="#8f3b34" stroke-width="1.200"/>
<path class="cl" d="M710 318.800V337.800" style="stroke-width:1.300"/>
<path class="cl" d="M713.700 318.600V324.200M713.700 325.800V331.400M713.700 332.800V338.200" style="stroke-width:1.300"/>
<path class="cl" d="M713.700 321.400H727M713.700 335.600H727M713.700 328.500H723.400V335.600" style="stroke-width:0.9"/>
<path d="M714.400 328.500l3-1.700v3.400z" fill="#8f3b34"/>
<path d="M724.600 326.800h5.200l-2.600 3.600z" fill="#c9c8aa" stroke="#8f3b34" stroke-width="0.7"/><path class="cl" d="M724.600 330.600h5.200" style="stroke-width:0.7"/>
<polyline class="w" points="727,302 727,356"/>
<rect class="mb" x="722" y="347.6" width="3.2" height="3.2"/>
<text class="r" x="738" y="321.6" style="font-size:9px">Q1</text>
<text class="v" x="738" y="328.6">IRFZ44N</text>
<text class="t" x="738" y="335">&lt;TEXT&gt;</text>
<polyline class="w" points="693.25,342.5 693.25,362.75"/>
<path class="c" d="M686.65 369.5H699.85L693.25 362.75Z"/>
<path class="cl" d="M686.65 364.55V362.75H699.85V360.95" style="stroke-width:1.2"/>
<polyline class="w" points="693.25,369.5 693.25,389.75"/>
<rect class="mb" x="687.8" y="374" width="3.2" height="3.2"/>
<text class="r" x="704.4" y="370.4">D3</text>
<text class="v" x="704.4" y="378">1N4732A</text>
<text class="t" x="704.4" y="384.4">&lt;TEXT&gt;</text>
<path class="cl" d="M763.800 288.500H784.400M770 292.200H778M763.800 318.800H784.400M770 322.400H778" style="stroke-width:1.200"/>
<path class="cl" d="M774.250 294.500V317" style="stroke-width:1;stroke-dasharray:3.200 2.400"/>
<polyline class="w" points="774.25,322.4 774.25,389.75"/>
<rect class="mb" x="776" y="327" width="3.2" height="3.2"/>
<text class="r" x="787.8" y="295.4">B1</text>
<text class="v" x="788.8" y="303.4">12V</text>
<text class="t" x="788.8" y="309.6">&lt;TEXT&gt;</text>
<polyline class="w" points="659.5,342.5 673,342.5 673,389.75 774.25,389.75"/>
<circle class="j" cx="693.25" cy="389.75" r="1.7"/>
<circle class="j" cx="713.5" cy="389.75" r="1.7"/>
<circle class="j" cx="727" cy="389.75" r="1.7"/>
<polyline class="w" points="713.5,389.75 713.5,403.25"/>
<path class="w" d="M707 403.25H720M709.5 406.55H717.5M711.9 409.55H715.1" style="stroke-width:1.15"/>
<defs>
<linearGradient id="sgt" x1="0" y1="0" x2="0" y2="1"><stop offset="0" stop-color="#8fa9ee"/><stop offset="0.2" stop-color="#6c8fe6"/><stop offset="1" stop-color="#7d9ceb"/></linearGradient>
<radialGradient id="kg" cx="0.35" cy="0.3" r="0.8"><stop offset="0" stop-color="#d9d9e6"/><stop offset="0.5" stop-color="#a3a3bb"/><stop offset="1" stop-color="#77778f"/></radialGradient>
<radialGradient id="kr" cx="0.35" cy="0.3" r="0.8"><stop offset="0" stop-color="#f6b3b3"/><stop offset="0.5" stop-color="#e76464"/><stop offset="1" stop-color="#c94545"/></radialGradient>
</defs>
<rect x="33.9" y="44.2" width="213.1" height="59" rx="1.2" fill="#7a92e3"/>
<rect x="34.6" y="44.9" width="211.7" height="8.2" fill="url(#sgt)"/>
<text x="36" y="50.900" font-size="5.200" font-weight="bold" fill="#dfe7fb" textLength="49.400" lengthAdjust="spacingAndGlyphs">VSM Signal Generator</text>
<rect x="239.800" y="45.800" width="5.800" height="6" rx="0.800" fill="#9cb2ee" stroke="#dbe4fa" stroke-width="0.4"/><path d="M241.400 47.400l2.600 2.800M244 47.400l-2.600 2.800" stroke="#eef2fd" stroke-width="0.700"/>
<rect x="35.400" y="53.100" width="210.200" height="48.600" fill="#bebebe"/>
<path d="M43.5 58.3H72.9L78.4 63.8V93.2L72.9 98.7H68.4V91.3H68.3L71.8 87.8V68.7L68.3 65.2H48.9L45.4 68.7V87.8L48.9 91.3H52V98.7H43.5L38 93.2V63.8Z" fill="#ebebeb" stroke="#2e2e2e" stroke-width="0.7" stroke-linejoin="round"/>
<rect x="52.8" y="92.400" width="14.600" height="5.800" rx="0.800" fill="#0a0f0a"/>
<text x="60.1" y="97.200" font-size="4.600" font-weight="bold" fill="#35d24a" text-anchor="middle">150</text>
<circle cx="58.6" cy="78.9" r="7.300" fill="url(#kg)"/>
<text x="58.6" y="69.200" font-size="3.500" fill="#333" text-anchor="middle">Centre</text>
<text x="48.7" y="63.800" font-size="3.600" fill="#444" text-anchor="middle">5</text>
<text x="55.9" y="63.800" font-size="3.600" fill="#444" text-anchor="middle">6</text>
<text x="63.4" y="63.800" font-size="3.600" fill="#444" text-anchor="middle">7</text>
<text x="71.6" y="63.800" font-size="3.600" fill="#444" text-anchor="middle">8</text>
<text x="41.7" y="68.7" font-size="3.600" fill="#444" text-anchor="middle">4</text>
<text x="41.7" y="76.2" font-size="3.600" fill="#444" text-anchor="middle">3</text>
<text x="41.7" y="83.7" font-size="3.600" fill="#444" text-anchor="middle">2</text>
<text x="41.7" y="91.2" font-size="3.600" fill="#444" text-anchor="middle">1</text>
<text x="48.3" y="97" font-size="3.600" fill="#444" text-anchor="middle">0</text>
<text x="74.9" y="72.7" font-size="3.600" fill="#444" text-anchor="middle">9</text>
<text x="74.9" y="80.4" font-size="3.600" fill="#444" text-anchor="middle">10</text>
<text x="74.9" y="88.1" font-size="3.600" fill="#444" text-anchor="middle">11</text>
<text x="71.9" y="96.600" font-size="3.600" fill="#444" text-anchor="middle">12</text>
<path d="M58.6 78.9l-6.400 2.300" stroke="#33333f" stroke-width="1"/>
<path d="M130.8 58.3H160.2L165.7 63.8V93.2L160.2 98.7H155.7V91.3H155.6L159.1 87.8V68.7L155.6 65.2H136.2L132.7 68.7V87.8L136.2 91.3H139.3V98.7H130.8L125.3 93.2V63.8Z" fill="#ebebeb" stroke="#2e2e2e" stroke-width="0.7" stroke-linejoin="round"/>
<rect x="140.1" y="92.400" width="14.600" height="5.800" rx="0.800" fill="#0a0f0a"/>
<text x="147.4" y="97.200" font-size="4.600" font-weight="bold" fill="#35d24a" text-anchor="middle">12.0</text>
<circle cx="145.9" cy="78.9" r="7.300" fill="url(#kr)"/>
<text x="145.9" y="69.200" font-size="3.500" fill="#333" text-anchor="middle">Level</text>
<text x="136" y="63.800" font-size="3.600" fill="#444" text-anchor="middle">5</text>
<text x="143.2" y="63.800" font-size="3.600" fill="#444" text-anchor="middle">6</text>
<text x="150.7" y="63.800" font-size="3.600" fill="#444" text-anchor="middle">7</text>
<text x="158.9" y="63.800" font-size="3.600" fill="#444" text-anchor="middle">8</text>
<text x="129" y="68.7" font-size="3.600" fill="#444" text-anchor="middle">4</text>
<text x="129" y="76.2" font-size="3.600" fill="#444" text-anchor="middle">3</text>
<text x="129" y="83.7" font-size="3.600" fill="#444" text-anchor="middle">2</text>
<text x="129" y="91.2" font-size="3.600" fill="#444" text-anchor="middle">1</text>
<text x="135.6" y="97" font-size="3.600" fill="#444" text-anchor="middle">0</text>
<text x="162.2" y="72.7" font-size="3.600" fill="#444" text-anchor="middle">9</text>
<text x="162.2" y="80.4" font-size="3.600" fill="#444" text-anchor="middle">10</text>
<text x="162.2" y="88.1" font-size="3.600" fill="#444" text-anchor="middle">11</text>
<text x="159.2" y="96.600" font-size="3.600" fill="#444" text-anchor="middle">12</text>
<path d="M145.9 78.9l5.400 4.200" stroke="#5a2020" stroke-width="1"/>
<path d="M81.6 61.800l2-2h5.100v28h-7.100z" fill="#ebebeb" stroke="#2e2e2e" stroke-width="0.7"/>
<text x="85.2" y="66" font-size="3.400" fill="#444" text-anchor="middle">10</text>
<text x="85.2" y="75.8" font-size="3.400" fill="#444" text-anchor="middle">1</text>
<text x="85.2" y="85.6" font-size="3.400" fill="#444" text-anchor="middle">0.1</text>
<path d="M92.3 58.300h28.100l2 2v9h-7.400v-4.400h-22.700z" fill="#ebebeb" stroke="#2e2e2e" stroke-width="0.7"/>
<text x="96.6" y="63.400" font-size="3.400" fill="#444" text-anchor="middle">0.1</text>
<text x="107" y="63.400" font-size="3.400" fill="#444" text-anchor="middle">1</text>
<text x="118.6" y="63.400" font-size="3.400" fill="#444" text-anchor="middle">10</text>
<path d="M115 70.500h7.400v17.200h-7.400z" fill="#ebebeb" stroke="#2e2e2e" stroke-width="0.7"/>
<text x="118.7" y="76.8" font-size="3.400" fill="#444" text-anchor="middle">0.1</text>
<text x="118.7" y="84.4" font-size="3.400" fill="#444" text-anchor="middle">1</text>
<circle cx="102.2" cy="78.9" r="7.300" fill="url(#kg)"/>
<text x="102.2" y="69.200" font-size="3.500" fill="#333" text-anchor="middle">Range</text>
<text x="102.2" y="97" font-size="3.800" fill="#333" text-anchor="middle">Frequency</text>
<path d="M102.2 78.9l-2.200-6.400" stroke="#33333f" stroke-width="1"/>
<path d="M169.500 60.800l3.300-3.300h16.900v7h-13.200v15h-7z" fill="#ebebeb" stroke="#2e2e2e" stroke-width="0.7"/>
<path d="M210.300 60.800l-3.300-3.300h-16.600v7h12.900v15h7z" fill="#ebebeb" stroke="#2e2e2e" stroke-width="0.7"/>
<text x="184.6" y="62.6" font-size="3.400" fill="#444" text-anchor="middle">10</text>
<text x="173" y="75" font-size="3.400" fill="#444" text-anchor="middle">1</text>
<text x="195" y="62.6" font-size="3.400" fill="#444" text-anchor="middle">0.1</text>
<text x="206.8" y="75" font-size="3.400" fill="#444" text-anchor="middle">1</text>
<circle cx="190" cy="78.9" r="7.500" fill="url(#kr)"/>
<text x="190" y="69" font-size="3.500" fill="#333" text-anchor="middle">Range</text>
<text x="190" y="97" font-size="3.800" fill="#333" text-anchor="middle">Amplitude</text>
<path d="M190 78.9l6.600-2.600" stroke="#5a2020" stroke-width="1"/>
<circle cx="214.500" cy="59.3" r="1.700" fill="#5be06a" stroke="#cdeed0" stroke-width="0.5"/>
<circle cx="214.500" cy="65.7" r="1.500" fill="#16301a"/>
<circle cx="214.500" cy="72" r="1.500" fill="#16301a"/>
<circle cx="214.500" cy="78.1" r="1.500" fill="#16301a"/>
<circle cx="214.500" cy="85.7" r="1.700" fill="#5be06a" stroke="#cdeed0" stroke-width="0.5"/>
<circle cx="214.500" cy="91.8" r="1.500" fill="#16301a"/>
<path d="M219.400 61v-3.200h2.600v3.200h2.600v-3.200" fill="none" stroke="#222" stroke-width="0.6"/>
<path d="M219.400 67l2.600-2.800v2.800l2.600-2.800" fill="none" stroke="#222" stroke-width="0.6"/>
<path d="M219.400 73.300l1.300-2.600 2.600 2.600 1.300-1.400" fill="none" stroke="#222" stroke-width="0.6"/>
<path d="M219.400 78.600q1.300-3.400 2.600 0t2.600 0" fill="none" stroke="#222" stroke-width="0.6"/>
<text x="219" y="87" font-size="3.400" fill="#333">Uni</text><text x="219" y="93.100" font-size="3.400" fill="#333">Bi</text>
<rect x="231.300" y="58.8" width="8.600" height="8.200" fill="#8e8e8e" stroke="#5a5a5a" stroke-width="0.6"/>
<path d="M231.500 66.8v-7.800h8.200" fill="none" stroke="#c9c9c9" stroke-width="0.6"/>
<text x="235.600" y="71" font-size="3.500" fill="#333" text-anchor="middle">Waveform</text>
<rect x="231.300" y="84.5" width="8.600" height="8.200" fill="#8e8e8e" stroke="#5a5a5a" stroke-width="0.6"/>
<path d="M231.500 92.5v-7.800h8.200" fill="none" stroke="#c9c9c9" stroke-width="0.6"/>
<text x="235.600" y="96.7" font-size="3.500" fill="#333" text-anchor="middle">Polarity</text>
<defs>
<linearGradient id="tw" x1="0" y1="0" x2="0" y2="1"><stop offset="0" stop-color="#4a4a4a"/><stop offset="0.25" stop-color="#8e8e8e"/><stop offset="0.5" stop-color="#ffffff"/><stop offset="0.75" stop-color="#8e8e8e"/><stop offset="1" stop-color="#4a4a4a"/></linearGradient>
<linearGradient id="twh" x1="0" y1="0" x2="1" y2="0"><stop offset="0" stop-color="#3c3c3c"/><stop offset="0.22" stop-color="#9a9a9a"/><stop offset="0.5" stop-color="#fdfdfd"/><stop offset="0.78" stop-color="#9a9a9a"/><stop offset="1" stop-color="#3c3c3c"/></linearGradient>
<radialGradient id="ks" cx="0.4" cy="0.35" r="0.75"><stop offset="0" stop-color="#fafafa"/><stop offset="0.45" stop-color="#cfcfcf"/><stop offset="0.8" stop-color="#8f8f8f"/><stop offset="1" stop-color="#6a6a6a"/></radialGradient>
<pattern id="sg" x="28.600" y="234" width="8.340" height="8.340" patternUnits="userSpaceOnUse"><path d="M0.150 0V8.340M0 0.150H8.340" stroke="#556252" stroke-width="0.5" stroke-dasharray="0.7 0.35" fill="none"/></pattern>
</defs>
<rect x="25.800" y="224.600" width="290.200" height="185.500" rx="1.200" fill="#22277e"/><path d="M26.900 408.400V225.400H314" fill="none" stroke="#2f6fe8" stroke-width="2.200"/>
<rect x="26.600" y="225.200" width="287.400" height="8.200" fill="url(#tb)"/>
<text x="27.400" y="231.300" font-size="5.300" font-weight="bold" fill="#fff" textLength="45" lengthAdjust="spacingAndGlyphs">Digital Oscilloscope</text>
<rect x="307.400" y="226" width="6" height="6.400" rx="0.900" fill="#d9502f" stroke="#f3d9d0" stroke-width="0.4"/><path d="M309 227.700l2.800 3M311.800 227.700l-2.800 3" stroke="#fff" stroke-width="0.800"/>
<rect x="28" y="233.600" width="168.600" height="174.600" fill="#b0b0b0"/>
<rect x="28.600" y="234" width="166.900" height="166.800" fill="#030303"/>
<rect x="28.600" y="234" width="166.900" height="166.800" fill="url(#sg)"/>
<path d="M112.200 234V400.800M28.600 317.500H195.500" stroke="#8c8c84" stroke-width="0.5"/>
<path d="M28.600 255.600H56.600V263.300H112.300V255.600H167.900V263.300H195.500" fill="none" stroke="#c2c288" stroke-width="0.8"/>
<path d="M28.600 284.200H38.600V292.200H75.400V284.200H150.800V292.200H187.200V284.200H195.500" fill="none" stroke="#6f97af" stroke-width="0.8"/>
<path d="M28.600 308.600H38.600V348.400H75.400V308.600H150.800V348.400H187.200V308.600H195.500" fill="none" stroke="#3a7456" stroke-width="0.78"/>
<path d="M28.600 392.200H195.500" fill="none" stroke="#8a3a3a" stroke-width="0.8"/>
<rect x="28.200" y="401.400" width="167.600" height="6.600" fill="#fbfbfb"/>
<rect x="28.200" y="401.400" width="6.400" height="6.600" fill="#e9e9e9" stroke="#9a9a9a" stroke-width="0.4"/><path d="M32.400 403.100l-2.200 1.600 2.200 1.600z" fill="#111"/>
<rect x="189.600" y="401.400" width="6.400" height="6.600" fill="#e9e9e9" stroke="#9a9a9a" stroke-width="0.4"/><path d="M191.800 403.100l2.200 1.600-2.200 1.600z" fill="#111"/>
<rect x="184" y="401.400" width="5.600" height="6.600" fill="#dcdcdc" stroke="#a8a8a8" stroke-width="0.4"/>
<rect x="196.600" y="233.600" width="117.300" height="174.600" fill="#bababa"/>
<rect x="196.600" y="233.600" width="117.300" height="9.600" fill="#c4c4c4"/><rect x="196.600" y="321" width="117.300" height="10.600" fill="#c4c4c4"/>
<path d="M235.700 233.600V408.200M275.400 233.600V408.200M196.600 320.600H313.900M196.600 243.200H313.900M196.600 331.600H313.900" stroke="#8a8a8a" stroke-width="0.6" fill="none"/>
<path d="M236.300 233.600V408.200M276 233.600V408.200M196.600 321.200H313.900" stroke="#d4d4d4" stroke-width="0.5" fill="none"/>
<text x="216.3" y="239.9" font-size="4.900" font-weight="bold" fill="#cfa99d" text-anchor="middle" textLength="17" lengthAdjust="spacingAndGlyphs">Trigger</text>
<text x="255.6" y="239.9" font-size="4.900" font-weight="bold" fill="#f2ee3a" text-anchor="middle" textLength="22.5" lengthAdjust="spacingAndGlyphs">Channel A</text>
<text x="294.6" y="239.9" font-size="4.900" font-weight="bold" fill="#e2198a" text-anchor="middle" textLength="22.5" lengthAdjust="spacingAndGlyphs">Channel C</text>
<text x="216.3" y="328.6" font-size="4.900" font-weight="bold" fill="#ee8a2a" text-anchor="middle" textLength="24" lengthAdjust="spacingAndGlyphs">Horizontal</text>
<text x="255.6" y="328.6" font-size="4.900" font-weight="bold" fill="#2a9ae0" text-anchor="middle" textLength="22.5" lengthAdjust="spacingAndGlyphs">Channel B</text>
<text x="294.6" y="328.6" font-size="4.900" font-weight="bold" fill="#169a5e" text-anchor="middle" textLength="22.5" lengthAdjust="spacingAndGlyphs">Channel D</text>
<text x="209.6" y="248" font-size="3.5" fill="#2c2c2c" text-anchor="middle">Level</text>
<rect x="202.3" y="249" width="15.9" height="34.6" fill="#5c5c5c"/>
<rect x="205" y="250" width="10.5" height="32.6" fill="url(#tw)"/>
<text x="210.25" y="259.4" font-size="3.6" fill="#e0e0e0" text-anchor="middle">-10</text>
<text x="210.25" y="267.6" font-size="3.6" fill="#1a1a1a" text-anchor="middle">0</text>
<text x="210.25" y="275.8" font-size="3.6" fill="#e0e0e0" text-anchor="middle">10</text>
<path d="M202.4 264.8l2.200 1.500l-2.200 1.500zM218.1 264.8l-2.200 1.500l2.200 1.500z" fill="#d22"/>
<text x="225" y="250.2" font-size="3.5" fill="#2c2c2c" text-anchor="middle">AC</text>
<text x="225" y="255.4" font-size="3.5" fill="#2c2c2c" text-anchor="middle">DC</text>
<rect x="229.600" y="245.200" width="5.600" height="12.600" fill="#f2f2f2" stroke="#6c6c6c" stroke-width="0.5"/><rect x="230.600" y="246.400" width="3.600" height="5" fill="#7c7c7c"/>
<rect x="229.600" y="262.800" width="5.600" height="12.400" fill="#f2f2f2" stroke="#6c6c6c" stroke-width="0.5"/><rect x="230.600" y="269" width="3.600" height="5" fill="#7c7c7c"/>
<path d="M224 266.600h1.400v-3h1.600M224 273.600h1.400v-3h-1.400" fill="none" stroke="#333" stroke-width="0.5"/>
<text x="227.6" y="286.4" font-size="3.5" fill="#2c2c2c" text-anchor="end">Auto</text>
<rect x="230" y="282" width="5.400" height="5.800" fill="#f7d0dc" stroke="#8a6a72" stroke-width="0.5"/>
<text x="227.6" y="293" font-size="3.5" fill="#2c2c2c" text-anchor="end">One-Shot</text>
<rect x="230" y="289.200" width="5.400" height="5.600" fill="#9c9c9c" stroke="#666" stroke-width="0.5"/>
<text x="227.6" y="299.6" font-size="3.5" fill="#2c2c2c" text-anchor="end">Cursors</text>
<rect x="230" y="296.200" width="5.400" height="5.600" fill="#9c9c9c" stroke="#666" stroke-width="0.5"/>
<text x="216.3" y="307.8" font-size="3.5" fill="#2c2c2c" text-anchor="middle">Source</text>
<circle cx="208.8" cy="311.600" r="0.900" fill="#e9e23a"/>
<circle cx="214.3" cy="311.600" r="0.900" fill="#2a8ae0"/>
<circle cx="220" cy="311.600" r="0.900" fill="#e2198a"/>
<circle cx="226" cy="311.600" r="0.900" fill="#169a5e"/>
<rect x="204.400" y="314.400" width="25.200" height="4.400" fill="#f0f0f0" stroke="#6c6c6c" stroke-width="0.5"/><rect x="205" y="316" width="24" height="1.200" fill="#3c3c3c"/><rect x="216.600" y="314.600" width="4.600" height="4" fill="#8c8c8c" stroke="#555" stroke-width="0.4"/>
<text x="248.5" y="248" font-size="3.5" fill="#2c2c2c" text-anchor="middle">Position</text>
<rect x="240" y="248.6" width="17.8" height="31" fill="#5c5c5c"/>
<rect x="242.7" y="249.6" width="12.4" height="29" fill="url(#tw)"/>
<text x="248.9" y="257.2" font-size="3.6" fill="#e0e0e0" text-anchor="middle">130</text>
<text x="248.9" y="265.4" font-size="3.6" fill="#1a1a1a" text-anchor="middle">140</text>
<text x="248.9" y="273.6" font-size="3.6" fill="#e0e0e0" text-anchor="middle">150</text>
<path d="M240.1 262.6l2.200 1.500l-2.200 1.500zM257.7 262.6l-2.200 1.500l2.200 1.500z" fill="#d22"/>
<circle cx="238.1" cy="262.5" r="1" fill="#f2ee3a"/><circle cx="238.1" cy="265.7" r="1" fill="#f2ee3a"/>
<text x="264.7" y="250.2" font-size="3.5" fill="#2c2c2c" text-anchor="middle">AC</text>
<text x="264.7" y="256" font-size="3.5" fill="#2c2c2c" text-anchor="middle">DC</text>
<text x="264.7" y="261.8" font-size="3.5" fill="#2c2c2c" text-anchor="middle">GND</text>
<text x="264.7" y="267.6" font-size="3.5" fill="#2c2c2c" text-anchor="middle">OFF</text>
<text x="263.3" y="275.2" font-size="3.5" fill="#2c2c2c" text-anchor="middle">Invert</text>
<rect x="269.1" y="246.8" width="5.600" height="31.5" fill="#9e9e9e" stroke="#7a7a7a" stroke-width="0.4"/>
<rect x="271.3" y="248.3" width="1.200" height="28.5" fill="#3a3a3a"/>
<rect x="269.1" y="271.8" width="5.600" height="6.400" fill="#9a9a9a" stroke="#5c5c5c" stroke-width="0.5"/>
<path d="M269.3 278v-6h5.200" fill="none" stroke="#d6d6d6" stroke-width="0.5"/>
<text x="262.9" y="283" font-size="3.5" fill="#2c2c2c" text-anchor="middle">A+B</text>
<rect x="269.1" y="279.4" width="5.600" height="5.400" fill="#9c9c9c" stroke="#666" stroke-width="0.5"/>
<text x="287.6" y="248" font-size="3.5" fill="#2c2c2c" text-anchor="middle">Position</text>
<rect x="279.1" y="248.6" width="17.8" height="31" fill="#5c5c5c"/>
<rect x="281.8" y="249.6" width="12.4" height="29" fill="url(#tw)"/>
<text x="288" y="257.2" font-size="3.6" fill="#e0e0e0" text-anchor="middle">100</text>
<text x="288" y="265.4" font-size="3.6" fill="#1a1a1a" text-anchor="middle">110</text>
<text x="288" y="273.6" font-size="3.6" fill="#e0e0e0" text-anchor="middle">120</text>
<path d="M279.2 262.6l2.200 1.500l-2.200 1.500zM296.8 262.6l-2.200 1.500l2.200 1.500z" fill="#d22"/>
<circle cx="277.2" cy="262.5" r="1" fill="#e2198a"/><circle cx="277.2" cy="265.7" r="1" fill="#e2198a"/>
<text x="303.8" y="250.2" font-size="3.5" fill="#2c2c2c" text-anchor="middle">AC</text>
<text x="303.8" y="256" font-size="3.5" fill="#2c2c2c" text-anchor="middle">DC</text>
<text x="303.8" y="261.8" font-size="3.5" fill="#2c2c2c" text-anchor="middle">GND</text>
<text x="303.8" y="267.6" font-size="3.5" fill="#2c2c2c" text-anchor="middle">OFF</text>
<text x="302.4" y="275.2" font-size="3.5" fill="#2c2c2c" text-anchor="middle">Invert</text>
<rect x="308.2" y="246.8" width="5.600" height="31.5" fill="#9e9e9e" stroke="#7a7a7a" stroke-width="0.4"/>
<rect x="310.4" y="248.3" width="1.200" height="28.5" fill="#3a3a3a"/>
<rect x="308.2" y="271.8" width="5.600" height="6.400" fill="#9a9a9a" stroke="#5c5c5c" stroke-width="0.5"/>
<path d="M308.4 278v-6h5.200" fill="none" stroke="#d6d6d6" stroke-width="0.5"/>
<text x="302" y="283" font-size="3.5" fill="#2c2c2c" text-anchor="middle">C+D</text>
<rect x="308.2" y="279.4" width="5.600" height="5.400" fill="#9c9c9c" stroke="#666" stroke-width="0.5"/>
<path d="M237.4 320V301.8A18.4 18.4 0 0 1 274.2 301.8V320Z" fill="#f4f4f4" stroke="#8c8c8c" stroke-width="0.5"/>
<text x="241.8" y="307.7" font-size="2.6" fill="#555" text-anchor="middle">20</text>
<text x="240.91" y="303.04" font-size="2.6" fill="#555" text-anchor="middle">10</text>
<text x="241.52" y="298.34" font-size="2.6" fill="#555" text-anchor="middle">5</text>
<text x="243.58" y="294.08" font-size="2.6" fill="#555" text-anchor="middle">2</text>
<text x="246.87" y="290.67" font-size="2.6" fill="#555" text-anchor="middle">1</text>
<text x="251.07" y="288.47" font-size="2.6" fill="#555" text-anchor="middle">.5</text>
<text x="255.75" y="287.7" font-size="2.6" fill="#555" text-anchor="middle">.2</text>
<text x="260.43" y="288.44" font-size="2.6" fill="#555" text-anchor="middle">.1</text>
<text x="264.64" y="290.61" font-size="2.6" fill="#555" text-anchor="middle">50</text>
<text x="267.96" y="293.99" font-size="2.6" fill="#555" text-anchor="middle">20</text>
<text x="270.05" y="298.24" font-size="2.6" fill="#555" text-anchor="middle">10</text>
<text x="270.7" y="302.94" font-size="2.6" fill="#555" text-anchor="middle">5</text>
<text x="269.84" y="307.6" font-size="2.6" fill="#555" text-anchor="middle">2</text>
<circle cx="255.8" cy="301.6" r="10.800" fill="#6a6a6a"/>
<circle cx="255.8" cy="301.6" r="9.800" fill="url(#ks)"/>
<circle cx="255.2" cy="300.8" r="5" fill="#e9e9e9" opacity="0.55"/>
<circle cx="247.8" cy="301.6" r="1.700" fill="#f2ee3a"/>
<text x="242.4" y="317.6" font-size="3.6" fill="#2c2c2c" text-anchor="middle">V</text>
<rect x="249.2" y="313.8" width="14.400" height="4.800" fill="#fff" stroke="#7c7c7c" stroke-width="0.4"/>
<text x="250.2" y="317.5" font-size="3.4" fill="#2c2c2c" text-anchor="start">5</text>
<text x="269.4" y="317.6" font-size="3.6" fill="#2c2c2c" text-anchor="middle">mV</text>
<path d="M276.5 320V301.8A18.4 18.4 0 0 1 313.3 301.8V320Z" fill="#f4f4f4" stroke="#8c8c8c" stroke-width="0.5"/>
<text x="280.9" y="307.7" font-size="2.6" fill="#555" text-anchor="middle">20</text>
<text x="280.01" y="303.04" font-size="2.6" fill="#555" text-anchor="middle">10</text>
<text x="280.62" y="298.34" font-size="2.6" fill="#555" text-anchor="middle">5</text>
<text x="282.68" y="294.08" font-size="2.6" fill="#555" text-anchor="middle">2</text>
<text x="285.97" y="290.67" font-size="2.6" fill="#555" text-anchor="middle">1</text>
<text x="290.17" y="288.47" font-size="2.6" fill="#555" text-anchor="middle">.5</text>
<text x="294.85" y="287.7" font-size="2.6" fill="#555" text-anchor="middle">.2</text>
<text x="299.53" y="288.44" font-size="2.6" fill="#555" text-anchor="middle">.1</text>
<text x="303.74" y="290.61" font-size="2.6" fill="#555" text-anchor="middle">50</text>
<text x="307.06" y="293.99" font-size="2.6" fill="#555" text-anchor="middle">20</text>
<text x="309.15" y="298.24" font-size="2.6" fill="#555" text-anchor="middle">10</text>
<text x="309.8" y="302.94" font-size="2.6" fill="#555" text-anchor="middle">5</text>
<text x="308.94" y="307.6" font-size="2.6" fill="#555" text-anchor="middle">2</text>
<circle cx="294.9" cy="301.6" r="10.800" fill="#6a6a6a"/>
<circle cx="294.9" cy="301.6" r="9.800" fill="url(#ks)"/>
<circle cx="294.3" cy="300.8" r="5" fill="#e9e9e9" opacity="0.55"/>
<circle cx="286.93" cy="302.3" r="1.700" fill="#e2198a"/>
<text x="281.5" y="317.6" font-size="3.6" fill="#2c2c2c" text-anchor="middle">V</text>
<rect x="288.3" y="313.8" width="14.400" height="4.800" fill="#fff" stroke="#7c7c7c" stroke-width="0.4"/>
<text x="289.3" y="317.5" font-size="3.4" fill="#2c2c2c" text-anchor="start">5</text>
<text x="308.5" y="317.6" font-size="3.6" fill="#2c2c2c" text-anchor="middle">mV</text>
<text x="248.5" y="336.4" font-size="3.5" fill="#2c2c2c" text-anchor="middle">Position</text>
<rect x="240" y="337" width="17.8" height="31" fill="#5c5c5c"/>
<rect x="242.7" y="338" width="12.4" height="29" fill="url(#tw)"/>
<text x="248.9" y="345.6" font-size="3.6" fill="#e0e0e0" text-anchor="middle">40</text>
<text x="248.9" y="353.8" font-size="3.6" fill="#1a1a1a" text-anchor="middle">50</text>
<text x="248.9" y="362" font-size="3.6" fill="#e0e0e0" text-anchor="middle">60</text>
<path d="M240.1 351l2.200 1.500l-2.200 1.500zM257.7 351l-2.200 1.500l2.200 1.500z" fill="#d22"/>
<circle cx="238.1" cy="350.9" r="1" fill="#2a9ae0"/><circle cx="238.1" cy="354.1" r="1" fill="#2a9ae0"/>
<text x="264.7" y="338.6" font-size="3.5" fill="#2c2c2c" text-anchor="middle">AC</text>
<text x="264.7" y="344.4" font-size="3.5" fill="#2c2c2c" text-anchor="middle">DC</text>
<text x="264.7" y="350.2" font-size="3.5" fill="#2c2c2c" text-anchor="middle">GND</text>
<text x="264.7" y="356" font-size="3.5" fill="#2c2c2c" text-anchor="middle">OFF</text>
<text x="263.3" y="363.6" font-size="3.5" fill="#2c2c2c" text-anchor="middle">Invert</text>
<rect x="269.1" y="335.2" width="5.600" height="31.5" fill="#9e9e9e" stroke="#7a7a7a" stroke-width="0.4"/>
<rect x="271.3" y="336.7" width="1.200" height="28.5" fill="#3a3a3a"/>
<rect x="269.1" y="360.2" width="5.600" height="6.400" fill="#9a9a9a" stroke="#5c5c5c" stroke-width="0.5"/>
<path d="M269.3 366.4v-6h5.200" fill="none" stroke="#d6d6d6" stroke-width="0.5"/>
<text x="287.6" y="336.4" font-size="3.5" fill="#2c2c2c" text-anchor="middle">Position</text>
<rect x="279.1" y="337" width="17.8" height="31" fill="#5c5c5c"/>
<rect x="281.8" y="338" width="12.4" height="29" fill="url(#tw)"/>
<text x="288" y="345.6" font-size="3.6" fill="#e0e0e0" text-anchor="middle">60</text>
<text x="288" y="353.8" font-size="3.6" fill="#1a1a1a" text-anchor="middle">70</text>
<text x="288" y="362" font-size="3.6" fill="#e0e0e0" text-anchor="middle">80</text>
<path d="M279.2 351l2.200 1.500l-2.200 1.500zM296.8 351l-2.200 1.500l2.200 1.500z" fill="#d22"/>
<circle cx="277.2" cy="350.9" r="1" fill="#169a5e"/><circle cx="277.2" cy="354.1" r="1" fill="#169a5e"/>
<text x="303.8" y="338.6" font-size="3.5" fill="#2c2c2c" text-anchor="middle">AC</text>
<text x="303.8" y="344.4" font-size="3.5" fill="#2c2c2c" text-anchor="middle">DC</text>
<text x="303.8" y="350.2" font-size="3.5" fill="#2c2c2c" text-anchor="middle">GND</text>
<text x="303.8" y="356" font-size="3.5" fill="#2c2c2c" text-anchor="middle">OFF</text>
<text x="302.4" y="363.6" font-size="3.5" fill="#2c2c2c" text-anchor="middle">Invert</text>
<rect x="308.2" y="335.2" width="5.600" height="31.5" fill="#9e9e9e" stroke="#7a7a7a" stroke-width="0.4"/>
<rect x="310.4" y="336.7" width="1.200" height="28.5" fill="#3a3a3a"/>
<rect x="308.2" y="360.2" width="5.600" height="6.400" fill="#9a9a9a" stroke="#5c5c5c" stroke-width="0.5"/>
<path d="M308.4 366.4v-6h5.200" fill="none" stroke="#d6d6d6" stroke-width="0.5"/>
<path d="M237.4 408.2V390.6A18.4 18.4 0 0 1 274.2 390.6V408.2Z" fill="#f4f4f4" stroke="#8c8c8c" stroke-width="0.5"/>
<text x="241.8" y="396.5" font-size="2.6" fill="#555" text-anchor="middle">20</text>
<text x="240.91" y="391.84" font-size="2.6" fill="#555" text-anchor="middle">10</text>
<text x="241.52" y="387.14" font-size="2.6" fill="#555" text-anchor="middle">5</text>
<text x="243.58" y="382.88" font-size="2.6" fill="#555" text-anchor="middle">2</text>
<text x="246.87" y="379.47" font-size="2.6" fill="#555" text-anchor="middle">1</text>
<text x="251.07" y="377.27" font-size="2.6" fill="#555" text-anchor="middle">.5</text>
<text x="255.75" y="376.5" font-size="2.6" fill="#555" text-anchor="middle">.2</text>
<text x="260.43" y="377.24" font-size="2.6" fill="#555" text-anchor="middle">.1</text>
<text x="264.64" y="379.41" font-size="2.6" fill="#555" text-anchor="middle">50</text>
<text x="267.96" y="382.79" font-size="2.6" fill="#555" text-anchor="middle">20</text>
<text x="270.05" y="387.04" font-size="2.6" fill="#555" text-anchor="middle">10</text>
<text x="270.7" y="391.74" font-size="2.6" fill="#555" text-anchor="middle">5</text>
<text x="269.84" y="396.4" font-size="2.6" fill="#555" text-anchor="middle">2</text>
<circle cx="255.8" cy="390.4" r="10.800" fill="#6a6a6a"/>
<circle cx="255.8" cy="390.4" r="9.800" fill="url(#ks)"/>
<circle cx="255.2" cy="389.6" r="5" fill="#e9e9e9" opacity="0.55"/>
<circle cx="247.8" cy="390.4" r="1.700" fill="#2a9ae0"/>
<text x="242.4" y="405.8" font-size="3.6" fill="#2c2c2c" text-anchor="middle">V</text>
<rect x="249.2" y="402" width="14.400" height="4.800" fill="#fff" stroke="#7c7c7c" stroke-width="0.4"/>
<text x="250.2" y="405.7" font-size="3.4" fill="#2c2c2c" text-anchor="start">5</text>
<text x="269.4" y="405.8" font-size="3.6" fill="#2c2c2c" text-anchor="middle">mV</text>
<path d="M276.5 408.2V390.6A18.4 18.4 0 0 1 313.3 390.6V408.2Z" fill="#f4f4f4" stroke="#8c8c8c" stroke-width="0.5"/>
<text x="280.9" y="396.5" font-size="2.6" fill="#555" text-anchor="middle">20</text>
<text x="280.01" y="391.84" font-size="2.6" fill="#555" text-anchor="middle">10</text>
<text x="280.62" y="387.14" font-size="2.6" fill="#555" text-anchor="middle">5</text>
<text x="282.68" y="382.88" font-size="2.6" fill="#555" text-anchor="middle">2</text>
<text x="285.97" y="379.47" font-size="2.6" fill="#555" text-anchor="middle">1</text>
<text x="290.17" y="377.27" font-size="2.6" fill="#555" text-anchor="middle">.5</text>
<text x="294.85" y="376.5" font-size="2.6" fill="#555" text-anchor="middle">.2</text>
<text x="299.53" y="377.24" font-size="2.6" fill="#555" text-anchor="middle">.1</text>
<text x="303.74" y="379.41" font-size="2.6" fill="#555" text-anchor="middle">50</text>
<text x="307.06" y="382.79" font-size="2.6" fill="#555" text-anchor="middle">20</text>
<text x="309.15" y="387.04" font-size="2.6" fill="#555" text-anchor="middle">10</text>
<text x="309.8" y="391.74" font-size="2.6" fill="#555" text-anchor="middle">5</text>
<text x="308.94" y="396.4" font-size="2.6" fill="#555" text-anchor="middle">2</text>
<circle cx="294.9" cy="390.4" r="10.800" fill="#6a6a6a"/>
<circle cx="294.9" cy="390.4" r="9.800" fill="url(#ks)"/>
<circle cx="294.3" cy="389.6" r="5" fill="#e9e9e9" opacity="0.55"/>
<circle cx="287.38" cy="387.66" r="1.700" fill="#169a5e"/>
<text x="281.5" y="405.8" font-size="3.6" fill="#2c2c2c" text-anchor="middle">V</text>
<rect x="288.3" y="402" width="14.400" height="4.800" fill="#fff" stroke="#7c7c7c" stroke-width="0.4"/>
<text x="289.3" y="405.7" font-size="3.4" fill="#2c2c2c" text-anchor="start">2.5</text>
<text x="308.5" y="405.8" font-size="3.6" fill="#2c2c2c" text-anchor="middle">mV</text>
<text x="216.3" y="336.8" font-size="3.5" fill="#2c2c2c" text-anchor="middle">Source</text>
<circle cx="206.4" cy="340.200" r="0.900" fill="#c8c8c8"/>
<circle cx="211.6" cy="340.200" r="0.900" fill="#e9e23a"/>
<circle cx="217" cy="340.200" r="0.900" fill="#2a8ae0"/>
<circle cx="222.4" cy="340.200" r="0.900" fill="#e2198a"/>
<circle cx="227.8" cy="340.200" r="0.900" fill="#169a5e"/>
<rect x="201" y="342.800" width="31.600" height="4.600" fill="#f0f0f0" stroke="#6c6c6c" stroke-width="0.5"/><rect x="202" y="344.500" width="29.600" height="1.200" fill="#3c3c3c"/><rect x="201.400" y="343.100" width="4.800" height="4" fill="#8c8c8c" stroke="#555" stroke-width="0.4"/>
<text x="216.3" y="353.6" font-size="3.5" fill="#2c2c2c" text-anchor="middle">Position</text>
<rect x="199.400" y="355" width="34.400" height="14.600" fill="#8c8c8c"/><rect x="200.600" y="356.200" width="32" height="12.200" fill="url(#twh)"/>
<text x="206.8" y="363.6" font-size="3.6" fill="#e0e0e0" text-anchor="middle">210</text>
<text x="216.4" y="363.6" font-size="3.6" fill="#1a1a1a" text-anchor="middle">200</text>
<text x="226" y="363.6" font-size="3.6" fill="#e0e0e0" text-anchor="middle">190</text>
<path d="M214.800 353.800h3l-1.500 2.200zM214.800 370.800h3l-1.500-2.200z" fill="#d22"/>
<path d="M198 408.2V390.6A18.4 18.4 0 0 1 234.8 390.6V408.2Z" fill="#f4f4f4" stroke="#8c8c8c" stroke-width="0.5"/>
<text x="202.4" y="396.5" font-size="2.6" fill="#555" text-anchor="middle">20</text>
<text x="201.51" y="391.84" font-size="2.6" fill="#555" text-anchor="middle">10</text>
<text x="202.12" y="387.14" font-size="2.6" fill="#555" text-anchor="middle">5</text>
<text x="204.18" y="382.88" font-size="2.6" fill="#555" text-anchor="middle">2</text>
<text x="207.47" y="379.47" font-size="2.6" fill="#555" text-anchor="middle">1</text>
<text x="211.67" y="377.27" font-size="2.6" fill="#555" text-anchor="middle">.5</text>
<text x="216.35" y="376.5" font-size="2.6" fill="#555" text-anchor="middle">.2</text>
<text x="221.03" y="377.24" font-size="2.6" fill="#555" text-anchor="middle">.1</text>
<text x="225.24" y="379.41" font-size="2.6" fill="#555" text-anchor="middle">50</text>
<text x="228.56" y="382.79" font-size="2.6" fill="#555" text-anchor="middle">20</text>
<text x="230.65" y="387.04" font-size="2.6" fill="#555" text-anchor="middle">10</text>
<text x="231.3" y="391.74" font-size="2.6" fill="#555" text-anchor="middle">5</text>
<text x="230.44" y="396.4" font-size="2.6" fill="#555" text-anchor="middle">2</text>
<circle cx="216.4" cy="390.4" r="10.800" fill="#6a6a6a"/>
<circle cx="216.4" cy="390.4" r="9.800" fill="url(#ks)"/>
<circle cx="215.8" cy="389.6" r="5" fill="#e9e9e9" opacity="0.55"/>
<circle cx="216.4" cy="382.4" r="1.700" fill="#ee6a3a"/>
<text x="203" y="405.8" font-size="3.6" fill="#2c2c2c" text-anchor="middle">ms</text>
<rect x="209.8" y="402" width="14.400" height="4.800" fill="#fff" stroke="#7c7c7c" stroke-width="0.4"/>
<text x="210.8" y="405.7" font-size="3.4" fill="#2c2c2c" text-anchor="start">0.5m</text>
<text x="230" y="405.8" font-size="3.6" fill="#2c2c2c" text-anchor="middle">µs</text>
<rect x="0" y="426.5" width="800" height="11" fill="#ece9d8"/>
<rect x="0" y="428.100" width="800" height="0.5" fill="#cfccba"/><rect x="0" y="428.600" width="800" height="0.5" fill="#fbfaf5"/>
<rect x="0" y="435.900" width="800" height="1.500" fill="#f7f6f0"/>
<rect x="4.4" y="428.500" width="15.6" height="6.800" fill="#f1efe3" stroke="#4c4c42" stroke-width="0.7"/>
<rect x="20.8" y="428.500" width="15.6" height="6.800" fill="#f1efe3" stroke="#4c4c42" stroke-width="0.7"/>
<rect x="37.2" y="428.500" width="15.6" height="6.800" fill="#f1efe3" stroke="#4c4c42" stroke-width="0.7"/>
<rect x="53.6" y="428.500" width="15.6" height="6.800" fill="#f1efe3" stroke="#4c4c42" stroke-width="0.7"/>
<path d="M11 430.300l3.400 2.100-3.400 2.100z" fill="#1d7a2a"/>
<path d="M26.600 430.300l3 2.100-3 2.100z" fill="#222"/><rect x="30" y="430.300" width="1" height="4.200" fill="#222"/>
<rect x="43.200" y="430.300" width="1.600" height="4.200" fill="#d39b3a"/><rect x="46" y="430.300" width="1.600" height="4.200" fill="#d39b3a"/>
<rect x="59.600" y="430.300" width="4.200" height="4.200" fill="#111"/>
<path d="M76.200 429.300l3.200 5.800h-6.400z" fill="#f2cf2e" stroke="#5a4a10" stroke-width="0.5"/><rect x="75.900" y="431.100" width="0.700" height="2.200" fill="#222"/>
<text x="81.200" y="434.300" font-size="4.900" fill="#222" textLength="29" lengthAdjust="spacingAndGlyphs">12 Message(s)</text>
<rect x="114.600" y="429" width="626" height="6.800" fill="#ece9d8" stroke="#b9b6a4" stroke-width="0.5"/>
<text x="120" y="434.300" font-size="4.900" fill="#8a7f36" textLength="55" lengthAdjust="spacingAndGlyphs">PAUSED: 00:08:03.863367</text>
<rect x="744.600" y="429" width="53" height="6.800" fill="#ece9d8" stroke="#b9b6a4" stroke-width="0.5"/>
<rect x="-10" y="449.500" width="820" height="10.500" fill="#1941a5"/><rect x="-10" y="437.300" width="820" height="12.700" fill="url(#tk)"/>
<rect x="-10" y="449.500" width="46" height="10" fill="#2c7a2c"/><path d="M-10 437.300h46.500q3 0.500 3 6.300t-3 6.400h-46.500z" fill="url(#st)"/>
<path d="M5 440.800l2.800-0.700v2.900l-2.800 0.400z" fill="#e9613a"/><path d="M8.300 440l3-0.700v3.300l-3 0.400z" fill="#7ac043"/><path d="M5 444l2.800-0.400v2.900l-2.800-0.500z" fill="#5a9ae8"/><path d="M8.300 443.500l3-0.400v3.500l-3-0.500z" fill="#f2c933"/>
<text x="14.200" y="446.600" font-size="8" font-weight="bold" font-style="italic" fill="#fff" textLength="16" lengthAdjust="spacingAndGlyphs">пуск</text>
<rect x="44.8" y="438.600" width="64.2" height="10.400" rx="1.200" fill="#3c81f3" stroke="#2b62cb" stroke-width="0.4"/><rect x="45.6" y="438.900" width="62.6" height="1" rx="0.5" fill="#5e9bf8"/>
<circle cx="50.600" cy="443.800" r="2.900" fill="#d9263a" stroke="#f4c9cf" stroke-width="0.5"/><ellipse cx="50.600" cy="443.800" rx="1" ry="1.900" fill="#f7dfe2"/>
<text x="55.3" y="445.700" font-size="4.800" fill="#fff" textLength="44" lengthAdjust="spacingAndGlyphs">Микропроцессорное...</text>
<rect x="111" y="438.600" width="65" height="10.400" rx="1.200" fill="#1e52b7" stroke="#163e92" stroke-width="0.4"/>
<rect x="114.600" y="441.400" width="5.400" height="4.600" rx="0.800" fill="#9fb6e8"/><path d="M115.400 444q1.100-1.700 2-0.100t2 0" stroke="#243a95" stroke-width="0.600" fill="none"/>
<text x="121.5" y="445.700" font-size="4.800" fill="#fff" textLength="45" lengthAdjust="spacingAndGlyphs">VIHR - ISIS Professio...</text>
<rect x="179" y="438.600" width="64.6" height="10.400" rx="1.200" fill="#3c81f3" stroke="#2b62cb" stroke-width="0.4"/><rect x="179.8" y="438.900" width="63" height="1" rx="0.5" fill="#5e9bf8"/>
<rect x="183" y="441" width="4.600" height="5.600" fill="#dfe7f7" stroke="#5a76b5" stroke-width="0.4"/><rect x="183.800" y="441.800" width="3" height="1.300" fill="#7b9be0"/>
<text x="189.5" y="445.700" font-size="4.800" fill="#fff" textLength="35" lengthAdjust="spacingAndGlyphs">Калькулятор Плюс</text>
<rect x="310.6" y="438.600" width="65" height="10.400" rx="1.200" fill="#3c81f3" stroke="#2b62cb" stroke-width="0.4"/><rect x="311.4" y="438.900" width="63.4" height="1" rx="0.5" fill="#5e9bf8"/>
<path d="M314.800 441.600h2.200l0.600 0.800h3v3.900h-5.800z" fill="#f1d257" stroke="#8d7420" stroke-width="0.4"/>
<text x="321.1" y="445.700" font-size="4.800" fill="#fff" textLength="7" lengthAdjust="spacingAndGlyphs">401</text>
<text x="717.300" y="446" font-size="4.600" fill="#fff" textLength="6.500" lengthAdjust="spacingAndGlyphs">RU</text>
<rect x="729" y="449.500" width="81" height="10" fill="#095bc9"/><path d="M729 437.300h81v12.700h-81q-3-6.300 0-12.700z" fill="url(#tr)"/>
<circle cx="730.600" cy="443.900" r="2.700" fill="#e9f2fb"/><path d="M729.400 443.900l2.400-1.500v3z" fill="#2f7fd6"/>
<path d="M737.600 446.400l2.400-5.200 0.800 0.400-2.400 5.200z" fill="#dfe6ee"/>
<circle cx="746.200" cy="444" r="2.600" fill="#3e4f86"/><circle cx="746.800" cy="443.200" r="1.200" fill="#d65b5b"/>
<rect x="751.400" y="441.400" width="5.400" height="5" rx="1" fill="#46b05b"/><path d="M752.600 443.900h3" stroke="#e6f6e8" stroke-width="0.800"/>
<rect x="758.600" y="441.200" width="4" height="4.400" fill="#e9eef5" stroke="#7f93b6" stroke-width="0.4"/><rect x="760.200" y="442.600" width="4" height="4.400" fill="#f6f8fb" stroke="#7f93b6" stroke-width="0.4"/>
<rect x="766.800" y="440.800" width="6.400" height="6.200" rx="0.800" fill="#d4222f"/><path d="M768.400 445.800l1.600-3.800 1.600 3.800" stroke="#fff" stroke-width="0.700" fill="none"/>
<rect x="774.200" y="440.800" width="6.400" height="6.200" rx="0.800" fill="#c21d2c"/><path d="M776 442.200v3.600h2.400M776 444h2" stroke="#fff" stroke-width="0.700" fill="none"/>
<text x="783.800" y="446" font-size="4.700" fill="#fff" textLength="10.600" lengthAdjust="spacingAndGlyphs">12:46</text>
</g>
</svg></body></html>
